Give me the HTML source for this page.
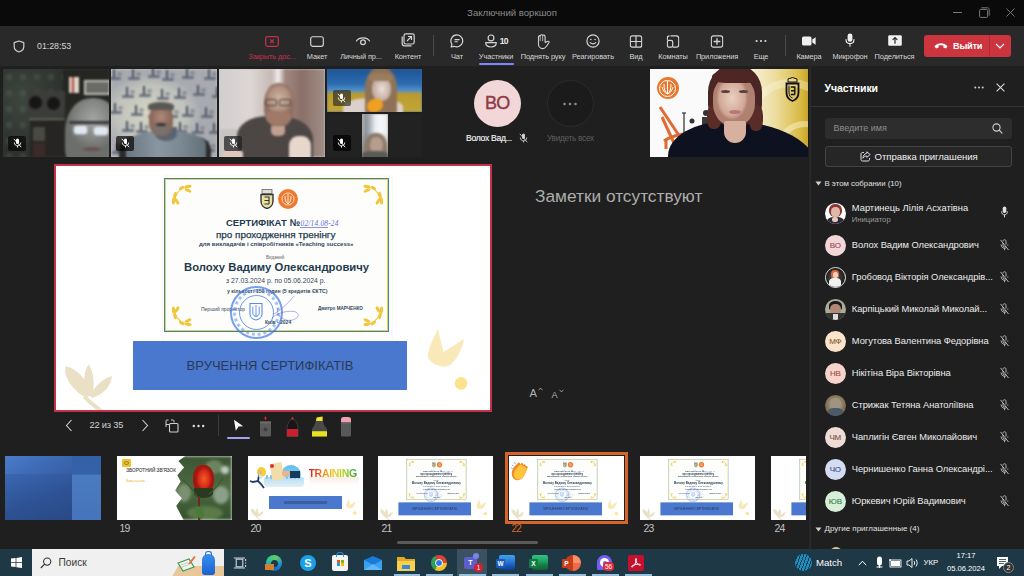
<!DOCTYPE html>
<html><head><meta charset="utf-8">
<style>
*{margin:0;padding:0;box-sizing:border-box}
svg{display:block}
html,body{width:1024px;height:576px;overflow:hidden;background:#1f1f1f;font-family:"Liberation Sans",sans-serif;color:#fff}
.a{position:absolute}
#title{left:0;top:0;width:1024px;height:26px;background:#0a0a0a}
#toolbar{left:0;top:26px;width:1024px;height:40px;background:#292929}
.tb{position:absolute;top:0;height:40px;text-align:center}
.tb svg{position:absolute;left:50%;top:8px;transform:translateX(-50%)}
.tb span{position:absolute;left:0;right:0;top:25.8px;font-size:7.4px;color:#d6d6d6;white-space:nowrap;text-align:center;letter-spacing:-0.1px}
#main{left:0;top:66px;width:1024px;height:482px;background:#1f1f1f}
#panel{left:811px;top:66px;width:213px;height:482.75px;background:#1f1f1f;box-shadow:-1px 0 0 #2a2a2a,-2px 0 0 #262626}
#taskbar{left:0;top:548.75px;width:1024px;height:27.25px;background:#1f3845}
</style></head>
<body>
<div id="title" class="a">
  <div class="a" style="left:0;width:1024px;top:7px;text-align:center;font-size:9.6px;color:#8c8c8c;padding-left:-2px">Заключний воркшоп</div>
  <div class="a" style="left:953px;top:12px;width:8.5px;height:1px;background:#7a7a7a"></div>
  <svg class="a" style="left:979px;top:7px" width="11" height="11" viewBox="0 0 11 11"><rect x="0.6" y="2.4" width="8" height="8" rx="1" fill="none" stroke="#7a7a7a" stroke-width="1"/><path d="M2.4 0.8 H8.6 C9.6 0.8 10.2 1.4 10.2 2.4 V8.6" fill="none" stroke="#7a7a7a" stroke-width="1"/></svg>
  <svg class="a" style="left:1006px;top:8px" width="9" height="9" viewBox="0 0 9 9"><path d="M0.5 0.5 L8.5 8.5 M8.5 0.5 L0.5 8.5" stroke="#7a7a7a" stroke-width="1"/></svg>
</div>
<div id="toolbar" class="a">
  <svg class="a" style="left:13px;top:14px" width="12" height="13" viewBox="0 0 12 13"><path d="M6 1 L10.8 2.6 V6.5 C10.8 9.3 8.6 11.2 6 12 C3.4 11.2 1.2 9.3 1.2 6.5 V2.6 Z" fill="none" stroke="#cfcfcf" stroke-width="1.2" stroke-linejoin="round"/></svg>
  <div class="a" style="left:37px;top:15px;font-size:8.8px;color:#d6d6d6;letter-spacing:0">01:28:53</div>

  <div class="tb" style="left:247px;width:50px">
    <svg width="14" height="11" viewBox="0 0 14 11" style="top:9.5px"><rect x="0.7" y="0.7" width="12.6" height="9.6" rx="1.8" fill="none" stroke="#c4314b" stroke-width="1.2"/><path d="M5.2 3.4 L8.8 7 M8.8 3.4 L5.2 7" stroke="#c4314b" stroke-width="1.2"/></svg>
    <span style="color:#c4314b">Закрыть дос...</span>
  </div>
  <div class="tb" style="left:297px;width:40px">
    <svg width="14" height="11" viewBox="0 0 14 11" style="top:9.5px"><rect x="0.7" y="0.7" width="12.6" height="9.6" rx="2" fill="none" stroke="#d6d6d6" stroke-width="1.15"/></svg>
    <span>Макет</span>
  </div>
  <div class="tb" style="left:338px;width:46px">
    <svg width="15" height="10" viewBox="0 0 15 10" style="top:10px;margin-left:1.5px"><path d="M1 5 C3.5 0.8 11.5 0.8 14 5" fill="none" stroke="#d6d6d6" stroke-width="1.2" stroke-linecap="round"/><circle cx="7.5" cy="6.2" r="2.4" fill="none" stroke="#d6d6d6" stroke-width="1.2"/></svg>
    <span>Личный пр...</span>
  </div>
  <div class="tb" style="left:390px;width:36px">
    <svg width="14" height="14" viewBox="0 0 14 14" style="top:7px"><rect x="3" y="0.8" width="10.2" height="10.2" rx="1.8" fill="none" stroke="#d6d6d6" stroke-width="1.2"/><path d="M1.2 3.5 V10.5 C1.2 12 2 12.8 3.5 12.8 H10.5" fill="none" stroke="#d6d6d6" stroke-width="1.2"/><path d="M6 8 L10.3 3.7 M7 3.5 H10.5 V7" fill="none" stroke="#d6d6d6" stroke-width="1.2"/></svg>
    <span>Контент</span>
  </div>
  <div class="a" style="left:433px;top:9px;width:1px;height:21px;background:#4a4a4a"></div>
  <div class="tb" style="left:442px;width:30px">
    <svg width="14" height="14" viewBox="0 0 14 14" style="top:8px"><path d="M7 0.9 A6 6 0 1 1 4.1 12.3 L1.2 13 L1.9 10.2 A6 6 0 0 1 7 0.9 Z" fill="none" stroke="#d6d6d6" stroke-width="1.2" stroke-linejoin="round"/><path d="M4.5 5.6 H9.5 M4.5 7.8 H7.8" stroke="#d6d6d6" stroke-width="1.1"/></svg>
    <span>Чат</span>
  </div>
  <div class="tb" style="left:476px;width:40px">
    <svg width="13" height="14" viewBox="0 0 13 14" style="top:7.8px;left:14.5px"><circle cx="6.5" cy="3.9" r="2.9" fill="none" stroke="#d6d6d6" stroke-width="1.15"/><path d="M1.2 8.6 H11.8 C11.8 11.2 9.6 13 6.5 13 C3.4 13 1.2 11.2 1.2 8.6 Z" fill="none" stroke="#d6d6d6" stroke-width="1.2" stroke-linejoin="round"/></svg>
    <div class="a" style="left:23.7px;top:9.6px;font-size:8.6px;font-weight:bold;color:#e8e8e8;letter-spacing:-0.6px">10</div>
    <span>Участники</span>
  </div>
  <div class="a" style="left:479px;top:37px;width:35px;height:2px;background:#7f85f5;border-radius:1px"></div>
  <div class="tb" style="left:518px;width:50px">
    <svg width="13" height="16" viewBox="0 0 13 16" style="top:7.5px;margin-left:0.5px"><path d="M7.6 8.4 V3 C7.6 1.2 6.3 0.7 5.3 1.4 C4.7 0.4 3.1 0.4 2.6 1.7 C1.5 1.5 0.9 2.4 0.9 3.5 V9.8 C0.9 12.6 2.8 14.6 5.1 14.6 C6.9 14.6 8 13.6 9 12.2 L11.5 8.5 C11.9 7.8 11.3 7.1 10.5 7.3 Z" fill="none" stroke="#d6d6d6" stroke-width="1.1" stroke-linejoin="round"/><path d="M2.7 2 V7.2 M5.2 1.6 V7.2" stroke="#d6d6d6" stroke-width="0.8"/></svg>
    <span>Поднять руку</span>
  </div>
  <div class="tb" style="left:570px;width:46px">
    <svg width="14" height="14" viewBox="0 0 14 14" style="top:7.6px"><circle cx="7" cy="7" r="6.1" fill="none" stroke="#d6d6d6" stroke-width="1.2"/><circle cx="4.9" cy="5.5" r="0.8" fill="#d6d6d6"/><circle cx="9.1" cy="5.5" r="0.8" fill="#d6d6d6"/><path d="M4.2 8.5 C5.5 10.3 8.5 10.3 9.8 8.5" fill="none" stroke="#d6d6d6" stroke-width="1.1" stroke-linecap="round"/></svg>
    <span>Реагировать</span>
  </div>
  <div class="tb" style="left:622px;width:28px">
    <svg width="13" height="13" viewBox="0 0 13 13" style="top:8.6px"><rect x="0.8" y="0.8" width="11.4" height="11.4" rx="2" fill="none" stroke="#d6d6d6" stroke-width="1.2"/><path d="M6.5 1 V12 M1 6.5 H12" stroke="#d6d6d6" stroke-width="1.2"/></svg>
    <span>Вид</span>
  </div>
  <div class="tb" style="left:655px;width:36px">
    <svg width="13" height="13" viewBox="0 0 13 13" style="top:8.6px"><path d="M4 0.8 H10 C11.3 0.8 12.2 1.7 12.2 3 V10 C12.2 11.3 11.3 12.2 10 12.2 H6.2" fill="none" stroke="#d6d6d6" stroke-width="1.2"/><rect x="0.8" y="5.4" width="5.4" height="6.8" rx="1.6" fill="none" stroke="#d6d6d6" stroke-width="1.2"/><path d="M0.8 5 V3 C0.8 1.7 1.7 0.8 3 0.8" fill="none" stroke="#d6d6d6" stroke-width="1.2"/></svg>
    <span>Комнаты</span>
  </div>
  <div class="tb" style="left:694px;width:46px">
    <svg width="13" height="13" viewBox="0 0 13 13" style="top:8.6px"><rect x="0.8" y="0.8" width="11.4" height="11.4" rx="2.2" fill="none" stroke="#d6d6d6" stroke-width="1.2"/><path d="M6.5 3.2 V9.8 M3.2 6.5 H9.8" stroke="#d6d6d6" stroke-width="1.3"/></svg>
    <span>Приложения</span>
  </div>
  <div class="tb" style="left:748px;width:26px">
    <svg width="12" height="4" viewBox="0 0 12 4" style="top:13px"><circle cx="1.6" cy="2" r="1.1" fill="#d6d6d6"/><circle cx="6" cy="2" r="1.1" fill="#d6d6d6"/><circle cx="10.4" cy="2" r="1.1" fill="#d6d6d6"/></svg>
    <span>Еще</span>
  </div>
  <div class="a" style="left:785px;top:9px;width:1px;height:21px;background:#4a4a4a"></div>
  <div class="tb" style="left:794px;width:30px">
    <svg width="14" height="10" viewBox="0 0 14 10" style="top:10px"><rect x="0" y="0.5" width="9.5" height="9" rx="1.6" fill="#f0f0f0"/><path d="M10.3 3.4 L13.6 1.2 V8.8 L10.3 6.6 Z" fill="#f0f0f0"/></svg>
    <span>Камера</span>
  </div>
  <div class="tb" style="left:830px;width:40px">
    <svg width="10" height="14" viewBox="0 0 10 14" style="top:7px"><rect x="2.6" y="0.4" width="4.8" height="8.4" rx="2.4" fill="#f0f0f0"/><path d="M1 6.5 C1 9 2.8 10.6 5 10.6 C7.2 10.6 9 9 9 6.5 M5 10.6 V13.2" fill="none" stroke="#f0f0f0" stroke-width="1.1" stroke-linecap="round"/></svg>
    <span>Микрофон</span>
  </div>
  <div class="tb" style="left:873px;width:43px">
    <svg width="14" height="11" viewBox="0 0 14 11" style="top:9px"><rect x="0.2" y="0.2" width="13.6" height="10.6" rx="1.3" fill="#f0f0f0"/><path d="M7 8.8 V2.6 M4.6 4.9 L7 2.5 L9.4 4.9" fill="none" stroke="#292929" stroke-width="1.2"/></svg>
    <span>Поделиться</span>
  </div>
  <div class="a" style="left:924px;top:9px;width:87px;height:22px;background:#cc353e;border-radius:3px">
    <svg class="a" style="left:10px;top:7px" width="14" height="7" viewBox="0 0 14 7"><path d="M0.5 4.2 C4 0.3 10 0.3 13.5 4.2 L12 6.5 L9.4 5.4 V3.6 C7.8 3 6.2 3 4.6 3.6 V5.4 L2 6.5 Z" fill="#fff"/></svg>
    <div class="a" style="left:29px;top:5.5px;font-size:9.2px;font-weight:bold;color:#fff;letter-spacing:-0.25px">Выйти</div>
    <div class="a" style="left:65px;top:0;width:1px;height:22px;background:#b02a33"></div>
    <svg class="a" style="left:71px;top:8px" width="10" height="6" viewBox="0 0 10 6"><path d="M1 1 L5 5 L9 1" fill="none" stroke="#fff" stroke-width="1.1"/></svg>
  </div>
</div>
<div id="main" class="a">
  <!-- tile 1 -->
  <div class="a" style="left:3px;top:3px;width:106px;height:88px;overflow:hidden;background:#30362f">
   <div class="a" style="left:0;top:0;width:106px;height:88px;filter:blur(0.8px)">
    <div class="a" style="left:0;top:0;width:62px;height:88px;background:radial-gradient(ellipse 50px 60px at 20px 30px,#3e4640,#2c322d 85%)"></div>
    <div class="a" style="left:0;top:0;width:62px;height:88px;opacity:.35;background:radial-gradient(circle at 6px 8px,#5a625a 0 3px,transparent 4px) 0 0/14px 16px"></div>
    <div class="a" style="left:60px;top:0;width:46px;height:88px;background:#252522"></div>
    <div class="a" style="left:24px;top:22px;width:38px;height:26px;background:#3c3d3a"></div>
    <div class="a" style="left:26px;top:27px;width:13px;height:13px;border-radius:50%;background:#161616;box-shadow:0 0 0 1px #3a3a38"></div>
    <div class="a" style="left:44px;top:28px;width:13px;height:13px;border-radius:50%;background:#161616;box-shadow:0 0 0 1px #3a3a38"></div>
    <div class="a" style="left:26px;top:49px;width:36px;height:2px;background:#5e5c52"></div>
    <div class="a" style="left:27px;top:52px;width:34px;height:36px;background:#262523"></div>
    <div class="a" style="left:30px;top:58px;width:12px;height:14px;background:#4a4a44"></div>
    <div class="a" style="left:30px;top:74px;width:12px;height:14px;background:#3a2a28"></div>
    <div class="a" style="left:66px;top:8px;width:10px;height:16px;background:linear-gradient(90deg,#d8d0c0 0 30%,#b04040 30% 45%,#e0d8c8 45%)"></div>
    <div class="a" style="left:81px;top:11px;width:27px;height:15px;background:#6a6a66;border:2px solid #c0c0b8"></div>
    <div class="a" style="left:62px;top:29px;width:56px;height:72px;border-radius:46% 46% 30% 30%;background:radial-gradient(ellipse 26px 30px at 28px 22px,#a4a6a4,#858785 60%,#6c6e6c)"></div>
    <div class="a" style="left:66px;top:52px;width:44px;height:3px;background:#3a3a3a;border-radius:2px"></div>
    <div class="a" style="left:71px;top:57px;width:13px;height:8px;border-radius:3px;background:#dfe8f0;box-shadow:0 0 2px #eef"></div>
    <div class="a" style="left:91px;top:58px;width:14px;height:8px;border-radius:3px;background:#dfe8f0;box-shadow:0 0 2px #eef"></div>
    <div class="a" style="left:80px;top:78px;width:18px;height:4px;border-radius:50%;background:#6a5050"></div>
   </div>
   <div class="a" style="left:5px;top:66.5px;width:18px;height:15.5px;border-radius:2px;background:rgba(8,8,8,.75)"><div class="a" style="left:4.5px;top:2.8px"><svg width="9" height="10" viewBox="0 0 9 10"><rect x="3" y="0.5" width="3" height="5.5" rx="1.5" fill="#fff"/><path d="M1.3 4.5 C1.3 6.6 2.7 7.8 4.5 7.8 C6.3 7.8 7.7 6.6 7.7 4.5 M4.5 7.8 V9.5" fill="none" stroke="#fff" stroke-width="0.9"/><path d="M0.8 0.8 L8.2 9.2" stroke="#fff" stroke-width="0.9"/></svg></div></div>
  </div>
  <!-- tile 2 -->
  <div class="a" style="left:111px;top:3px;width:106px;height:88px;overflow:hidden;background:#c8c9c0">
   <div class="a" style="left:0;top:0;width:106px;height:88px;filter:blur(0.9px)">
    <div class="a" style="left:0;top:0;width:106px;height:88px;background:radial-gradient(ellipse 50px 40px at 40px 45px,#d6d6c4,#c0c2bc 70%,#a8aab0)"></div>
    <div class="a" style="left:2.4px;top:0.2px;width:2px;height:9px;background:#4a5262"></div><div class="a" style="left:-1.6px;top:8.2px;width:12px;height:3px;border-radius:1px;background:#5a6272;opacity:.8"></div><div class="a" style="left:6.4px;top:3.2px;width:5px;height:4px;border-radius:50%;background:#6a7282;opacity:.6"></div><div class="a" style="left:21.2px;top:0.4px;width:2px;height:9px;background:#4a5262"></div><div class="a" style="left:17.2px;top:8.4px;width:12px;height:3px;border-radius:1px;background:#5a6272;opacity:.8"></div><div class="a" style="left:25.2px;top:3.4px;width:5px;height:4px;border-radius:50%;background:#6a7282;opacity:.6"></div><div class="a" style="left:40.8px;top:-1.7px;width:2px;height:9px;background:#4a5262"></div><div class="a" style="left:36.8px;top:6.3px;width:12px;height:3px;border-radius:1px;background:#5a6272;opacity:.8"></div><div class="a" style="left:44.8px;top:1.3px;width:5px;height:4px;border-radius:50%;background:#6a7282;opacity:.6"></div><div class="a" style="left:55.1px;top:1.3px;width:2px;height:9px;background:#4a5262"></div><div class="a" style="left:51.1px;top:9.3px;width:12px;height:3px;border-radius:1px;background:#5a6272;opacity:.8"></div><div class="a" style="left:59.1px;top:4.3px;width:5px;height:4px;border-radius:50%;background:#6a7282;opacity:.6"></div><div class="a" style="left:74.6px;top:-1.1px;width:2px;height:9px;background:#4a5262"></div><div class="a" style="left:70.6px;top:6.9px;width:12px;height:3px;border-radius:1px;background:#5a6272;opacity:.8"></div><div class="a" style="left:78.6px;top:1.9px;width:5px;height:4px;border-radius:50%;background:#6a7282;opacity:.6"></div><div class="a" style="left:97.0px;top:-0.1px;width:2px;height:9px;background:#4a5262"></div><div class="a" style="left:93.0px;top:7.9px;width:12px;height:3px;border-radius:1px;background:#5a6272;opacity:.8"></div><div class="a" style="left:101.0px;top:2.9px;width:5px;height:4px;border-radius:50%;background:#6a7282;opacity:.6"></div><div class="a" style="left:15.0px;top:17.9px;width:2px;height:9px;background:#4a5262"></div><div class="a" style="left:11.0px;top:25.9px;width:12px;height:3px;border-radius:1px;background:#5a6272;opacity:.8"></div><div class="a" style="left:19.0px;top:20.9px;width:5px;height:4px;border-radius:50%;background:#6a7282;opacity:.6"></div><div class="a" style="left:31.8px;top:16.6px;width:2px;height:9px;background:#4a5262"></div><div class="a" style="left:27.8px;top:24.6px;width:12px;height:3px;border-radius:1px;background:#5a6272;opacity:.8"></div><div class="a" style="left:35.8px;top:19.6px;width:5px;height:4px;border-radius:50%;background:#6a7282;opacity:.6"></div><div class="a" style="left:49.8px;top:19.5px;width:2px;height:9px;background:#4a5262"></div><div class="a" style="left:45.8px;top:27.5px;width:12px;height:3px;border-radius:1px;background:#5a6272;opacity:.8"></div><div class="a" style="left:53.8px;top:22.5px;width:5px;height:4px;border-radius:50%;background:#6a7282;opacity:.6"></div><div class="a" style="left:67.1px;top:19.0px;width:2px;height:9px;background:#4a5262"></div><div class="a" style="left:63.1px;top:27.0px;width:12px;height:3px;border-radius:1px;background:#5a6272;opacity:.8"></div><div class="a" style="left:71.1px;top:22.0px;width:5px;height:4px;border-radius:50%;background:#6a7282;opacity:.6"></div><div class="a" style="left:86.0px;top:16.3px;width:2px;height:9px;background:#4a5262"></div><div class="a" style="left:82.0px;top:24.3px;width:12px;height:3px;border-radius:1px;background:#5a6272;opacity:.8"></div><div class="a" style="left:90.0px;top:19.3px;width:5px;height:4px;border-radius:50%;background:#6a7282;opacity:.6"></div><div class="a" style="left:104.5px;top:18.4px;width:2px;height:9px;background:#4a5262"></div><div class="a" style="left:100.5px;top:26.4px;width:12px;height:3px;border-radius:1px;background:#5a6272;opacity:.8"></div><div class="a" style="left:108.5px;top:21.4px;width:5px;height:4px;border-radius:50%;background:#6a7282;opacity:.6"></div><div class="a" style="left:2.8px;top:34.1px;width:2px;height:9px;background:#4a5262"></div><div class="a" style="left:-1.2px;top:42.1px;width:12px;height:3px;border-radius:1px;background:#5a6272;opacity:.8"></div><div class="a" style="left:6.8px;top:37.1px;width:5px;height:4px;border-radius:50%;background:#6a7282;opacity:.6"></div><div class="a" style="left:24.2px;top:35.9px;width:2px;height:9px;background:#4a5262"></div><div class="a" style="left:20.2px;top:43.9px;width:12px;height:3px;border-radius:1px;background:#5a6272;opacity:.8"></div><div class="a" style="left:28.2px;top:38.9px;width:5px;height:4px;border-radius:50%;background:#6a7282;opacity:.6"></div><div class="a" style="left:41.3px;top:37.5px;width:2px;height:9px;background:#4a5262"></div><div class="a" style="left:37.3px;top:45.5px;width:12px;height:3px;border-radius:1px;background:#5a6272;opacity:.8"></div><div class="a" style="left:45.3px;top:40.5px;width:5px;height:4px;border-radius:50%;background:#6a7282;opacity:.6"></div><div class="a" style="left:59.3px;top:37.7px;width:2px;height:9px;background:#4a5262"></div><div class="a" style="left:55.3px;top:45.7px;width:12px;height:3px;border-radius:1px;background:#5a6272;opacity:.8"></div><div class="a" style="left:63.3px;top:40.7px;width:5px;height:4px;border-radius:50%;background:#6a7282;opacity:.6"></div><div class="a" style="left:75.4px;top:37.2px;width:2px;height:9px;background:#4a5262"></div><div class="a" style="left:71.4px;top:45.2px;width:12px;height:3px;border-radius:1px;background:#5a6272;opacity:.8"></div><div class="a" style="left:79.4px;top:40.2px;width:5px;height:4px;border-radius:50%;background:#6a7282;opacity:.6"></div><div class="a" style="left:93.7px;top:37.7px;width:2px;height:9px;background:#4a5262"></div><div class="a" style="left:89.7px;top:45.7px;width:12px;height:3px;border-radius:1px;background:#5a6272;opacity:.8"></div><div class="a" style="left:97.7px;top:40.7px;width:5px;height:4px;border-radius:50%;background:#6a7282;opacity:.6"></div><div class="a" style="left:15.3px;top:52.4px;width:2px;height:9px;background:#4a5262"></div><div class="a" style="left:11.3px;top:60.4px;width:12px;height:3px;border-radius:1px;background:#5a6272;opacity:.8"></div><div class="a" style="left:19.3px;top:55.4px;width:5px;height:4px;border-radius:50%;background:#6a7282;opacity:.6"></div><div class="a" style="left:28.8px;top:52.9px;width:2px;height:9px;background:#4a5262"></div><div class="a" style="left:24.8px;top:60.9px;width:12px;height:3px;border-radius:1px;background:#5a6272;opacity:.8"></div><div class="a" style="left:32.8px;top:55.9px;width:5px;height:4px;border-radius:50%;background:#6a7282;opacity:.6"></div><div class="a" style="left:51.8px;top:53.7px;width:2px;height:9px;background:#4a5262"></div><div class="a" style="left:47.8px;top:61.7px;width:12px;height:3px;border-radius:1px;background:#5a6272;opacity:.8"></div><div class="a" style="left:55.8px;top:56.7px;width:5px;height:4px;border-radius:50%;background:#6a7282;opacity:.6"></div><div class="a" style="left:67.8px;top:53.2px;width:2px;height:9px;background:#4a5262"></div><div class="a" style="left:63.8px;top:61.2px;width:12px;height:3px;border-radius:1px;background:#5a6272;opacity:.8"></div><div class="a" style="left:71.8px;top:56.2px;width:5px;height:4px;border-radius:50%;background:#6a7282;opacity:.6"></div><div class="a" style="left:85.0px;top:53.5px;width:2px;height:9px;background:#4a5262"></div><div class="a" style="left:81.0px;top:61.5px;width:12px;height:3px;border-radius:1px;background:#5a6272;opacity:.8"></div><div class="a" style="left:89.0px;top:56.5px;width:5px;height:4px;border-radius:50%;background:#6a7282;opacity:.6"></div><div class="a" style="left:102.1px;top:54.3px;width:2px;height:9px;background:#4a5262"></div><div class="a" style="left:98.1px;top:62.3px;width:12px;height:3px;border-radius:1px;background:#5a6272;opacity:.8"></div><div class="a" style="left:106.1px;top:57.3px;width:5px;height:4px;border-radius:50%;background:#6a7282;opacity:.6"></div><div class="a" style="left:4.5px;top:73.6px;width:2px;height:9px;background:#4a5262"></div><div class="a" style="left:0.5px;top:81.6px;width:12px;height:3px;border-radius:1px;background:#5a6272;opacity:.8"></div><div class="a" style="left:8.5px;top:76.6px;width:5px;height:4px;border-radius:50%;background:#6a7282;opacity:.6"></div><div class="a" style="left:23.1px;top:73.7px;width:2px;height:9px;background:#4a5262"></div><div class="a" style="left:19.1px;top:81.7px;width:12px;height:3px;border-radius:1px;background:#5a6272;opacity:.8"></div><div class="a" style="left:27.1px;top:76.7px;width:5px;height:4px;border-radius:50%;background:#6a7282;opacity:.6"></div><div class="a" style="left:42.1px;top:74.0px;width:2px;height:9px;background:#4a5262"></div><div class="a" style="left:38.1px;top:82.0px;width:12px;height:3px;border-radius:1px;background:#5a6272;opacity:.8"></div><div class="a" style="left:46.1px;top:77.0px;width:5px;height:4px;border-radius:50%;background:#6a7282;opacity:.6"></div><div class="a" style="left:59.0px;top:70.7px;width:2px;height:9px;background:#4a5262"></div><div class="a" style="left:55.0px;top:78.7px;width:12px;height:3px;border-radius:1px;background:#5a6272;opacity:.8"></div><div class="a" style="left:63.0px;top:73.7px;width:5px;height:4px;border-radius:50%;background:#6a7282;opacity:.6"></div><div class="a" style="left:78.2px;top:73.9px;width:2px;height:9px;background:#4a5262"></div><div class="a" style="left:74.2px;top:81.9px;width:12px;height:3px;border-radius:1px;background:#5a6272;opacity:.8"></div><div class="a" style="left:82.2px;top:76.9px;width:5px;height:4px;border-radius:50%;background:#6a7282;opacity:.6"></div><div class="a" style="left:96.4px;top:72.3px;width:2px;height:9px;background:#4a5262"></div><div class="a" style="left:92.4px;top:80.3px;width:12px;height:3px;border-radius:1px;background:#5a6272;opacity:.8"></div><div class="a" style="left:100.4px;top:75.3px;width:5px;height:4px;border-radius:50%;background:#6a7282;opacity:.6"></div>
    <div class="a" style="left:8px;top:68px;width:92px;height:24px;background:#2a2a2a;border-radius:14px 14px 0 0"></div>
    <div class="a" style="left:15px;top:62px;width:80px;height:30px;border-radius:45% 45% 0 0;background:linear-gradient(90deg,#6a7884,#8a96a0 40%,#7a8892 70%,#647078)"></div>
    <div class="a" style="left:44px;top:58px;width:22px;height:14px;border-radius:0 0 50% 50%;background:#5a6470"></div>
    <div class="a" style="left:38px;top:35px;width:24px;height:32px;border-radius:45% 45% 42% 42%;background:radial-gradient(ellipse 10px 12px at 12px 13px,#b08a7a,#8a6858)"></div>
    <div class="a" style="left:37px;top:33px;width:26px;height:8px;border-radius:50% 50% 10% 10%;background:#5a5854"></div>
    <div class="a" style="left:42px;top:54px;width:16px;height:12px;border-radius:30% 30% 50% 50%;background:#7a706c"></div>
    <div class="a" style="left:45px;top:54px;width:10px;height:3px;border-radius:50%;background:#3a3030"></div>
   </div>
   <div class="a" style="left:5px;top:66.5px;width:18px;height:15.5px;border-radius:2px;background:rgba(8,8,8,.72)"><div class="a" style="left:4.5px;top:2.8px"><svg width="9" height="10" viewBox="0 0 9 10"><rect x="3" y="0.5" width="3" height="5.5" rx="1.5" fill="#fff"/><path d="M1.3 4.5 C1.3 6.6 2.7 7.8 4.5 7.8 C6.3 7.8 7.7 6.6 7.7 4.5 M4.5 7.8 V9.5" fill="none" stroke="#fff" stroke-width="0.9"/><path d="M0.8 0.8 L8.2 9.2" stroke="#fff" stroke-width="0.9"/></svg></div></div>
  </div>
  <!-- tile 3 -->
  <div class="a" style="left:219px;top:3px;width:106px;height:88px;overflow:hidden;background:#d0c8c6">
   <div class="a" style="left:0;top:0;width:106px;height:88px;filter:blur(1px)">
    <div class="a" style="left:0;top:0;width:106px;height:88px;background:linear-gradient(90deg,#d2cfcf 0,#dcd6d4 30%,#c8bcb8 48%,#a08880 62%,#8a7068 78%,#a08e88 100%)"></div>
    <div class="a" style="left:52px;top:0;width:14px;height:45px;background:linear-gradient(90deg,transparent,#f4eef0,transparent)"></div>
    <div class="a" style="left:0;top:60px;width:30px;height:28px;background:#c8c4c4"></div>
    <div class="a" style="left:18px;top:47px;width:76px;height:50px;border-radius:40% 45% 0 0;background:#4c4644"></div>
    <div class="a" style="left:70px;top:67px;width:22px;height:24px;border-radius:40% 40% 0 0;background:#e6d6cc"></div>
    <div class="a" style="left:4px;top:80px;width:20px;height:10px;border-radius:40% 40% 0 0;background:#dcc8bc"></div>
    <div class="a" style="left:45px;top:14px;width:30px;height:44px;border-radius:46% 46% 42% 42%;background:radial-gradient(ellipse 14px 16px at 15px 16px,#d0b4a4,#b09080 75%,#907060)"></div>
    <div class="a" style="left:47px;top:42px;width:24px;height:14px;border-radius:30% 30% 50% 50%;background:#a07a68"></div>
    <div class="a" style="left:46px;top:30px;width:12px;height:7px;border:1.2px solid #4a403c;border-radius:2px"></div><div class="a" style="left:60px;top:30px;width:12px;height:7px;border:1.2px solid #4a403c;border-radius:2px"></div>
    <div class="a" style="left:52px;top:57px;width:14px;height:10px;background:#c0a090;border-radius:0 0 40% 40%"></div>
   </div>
   <div class="a" style="left:5px;top:66.5px;width:18px;height:15.5px;border-radius:2px;background:rgba(30,30,30,.72)"><div class="a" style="left:4.5px;top:2.8px"><svg width="9" height="10" viewBox="0 0 9 10"><rect x="3" y="0.5" width="3" height="5.5" rx="1.5" fill="#fff"/><path d="M1.3 4.5 C1.3 6.6 2.7 7.8 4.5 7.8 C6.3 7.8 7.7 6.6 7.7 4.5 M4.5 7.8 V9.5" fill="none" stroke="#fff" stroke-width="0.9"/><path d="M0.8 0.8 L8.2 9.2" stroke="#fff" stroke-width="0.9"/></svg></div></div>
  </div>
  <!-- tile 4 -->
  <div class="a" style="left:327px;top:3px;width:95px;height:43px;overflow:hidden;background:#2c6cb4">
   <div class="a" style="left:0;top:0;width:95px;height:43px;filter:blur(0.9px)">
    <div class="a" style="left:0;top:0;width:95px;height:43px;background:linear-gradient(180deg,#1e5494 0,#2c6cb0 35%,#5a94c8 52%,#b89a30 56%,#c4a636 100%)"></div>
    <div class="a" style="left:16px;top:29px;width:60px;height:20px;border-radius:45% 45% 0 0;background:#dcd0cc"></div>
    <div class="a" style="left:38px;top:-2px;width:32px;height:48px;border-radius:45% 45% 10% 10%;background:#8e7258"></div>
    <div class="a" style="left:45px;top:8px;width:19px;height:24px;border-radius:45%;background:radial-gradient(ellipse 8px 11px at 10px 12px,#ece0dc,#c8b0a4)"></div>
    <div class="a" style="left:42px;top:4px;width:24px;height:8px;border-radius:50% 50% 20% 20%;background:#9a7c5e"></div>
    <div class="a" style="left:40px;top:30px;width:16px;height:13px;border-radius:50% 40% 50% 40%;background:#f0a020;transform:rotate(-10deg)"></div>
   </div>
   <div class="a" style="left:5.5px;top:21px;width:18.5px;height:16px;border-radius:2px;background:rgba(50,50,35,.7)"><div class="a" style="left:4.5px;top:3px"><svg width="9" height="10" viewBox="0 0 9 10"><rect x="3" y="0.5" width="3" height="5.5" rx="1.5" fill="#fff"/><path d="M1.3 4.5 C1.3 6.6 2.7 7.8 4.5 7.8 C6.3 7.8 7.7 6.6 7.7 4.5 M4.5 7.8 V9.5" fill="none" stroke="#fff" stroke-width="0.9"/><path d="M0.8 0.8 L8.2 9.2" stroke="#fff" stroke-width="0.9"/></svg></div></div>
  </div>
  <div class="a" style="left:327px;top:48px;width:95px;height:43px;overflow:hidden;background:#222">
    <div class="a" style="left:35px;top:0;width:26px;height:43px;overflow:hidden;background:#a09890">
     <div class="a" style="left:0;top:0;width:26px;height:43px;filter:blur(0.9px)">
      <div class="a" style="left:0;top:0;width:26px;height:43px;background:linear-gradient(90deg,#c8c0b8 0,#8a9098 12%,#a8b0b8 30%,#e8ecf0 50%,#f6f8fa 70%,#e8ece8 100%)"></div>
      <div class="a" style="left:0;top:18px;width:26px;height:27px;background:linear-gradient(180deg,rgba(90,80,70,0),rgba(90,80,70,.6))"></div>
      <div class="a" style="left:3px;top:19px;width:22px;height:28px;border-radius:45% 45% 20% 20%;background:#8a7a68"></div>
      <div class="a" style="left:8px;top:23px;width:13px;height:16px;border-radius:45%;background:#b89c8c"></div>
      <div class="a" style="left:0;top:37px;width:26px;height:8px;background:#5a5a58;border-radius:40% 40% 0 0"></div>
     </div>
    </div>
    <div class="a" style="left:5.5px;top:21px;width:18.5px;height:16px;border-radius:2px;background:rgba(5,5,5,.8)"><div class="a" style="left:4.5px;top:3px"><svg width="9" height="10" viewBox="0 0 9 10"><rect x="3" y="0.5" width="3" height="5.5" rx="1.5" fill="#fff"/><path d="M1.3 4.5 C1.3 6.6 2.7 7.8 4.5 7.8 C6.3 7.8 7.7 6.6 7.7 4.5 M4.5 7.8 V9.5" fill="none" stroke="#fff" stroke-width="0.9"/><path d="M0.8 0.8 L8.2 9.2" stroke="#fff" stroke-width="0.9"/></svg></div></div>
  </div>
  <!-- avatar BO -->
  <div class="a" style="left:474px;top:14px;width:47px;height:47px;border-radius:50%;background:#f2d6d8;color:#8e3a44;font-size:18px;text-align:center;line-height:47px;-webkit-text-stroke:0.4px #8e3a44;letter-spacing:-0.3px">ВО</div>
  <div class="a" style="left:466px;top:66.5px;font-size:8.6px;color:#f4f4f4;white-space:nowrap;letter-spacing:-0.3px;-webkit-text-stroke:0.15px #f4f4f4">Волох Вад...</div>
  <div class="a" style="left:519px;top:67px"><svg width="9" height="10" viewBox="0 0 9 10"><rect x="3" y="0.5" width="3" height="5.5" rx="1.5" fill="#cfcfcf"/><path d="M1.3 4.5 C1.3 6.6 2.7 7.8 4.5 7.8 C6.3 7.8 7.7 6.6 7.7 4.5 M4.5 7.8 V9.5" fill="none" stroke="#cfcfcf" stroke-width="0.9"/><path d="M0.8 0.8 L8.2 9.2" stroke="#cfcfcf" stroke-width="0.9"/></svg></div>
  <div class="a" style="left:547px;top:14px;width:47px;height:47px;border-radius:50%;background:#1b1b1b;border:1px solid #2c2c2c"></div>
  <svg class="a" style="left:562px;top:36px" width="16" height="4" viewBox="0 0 16 4"><circle cx="2.5" cy="2" r="1.3" fill="#8a8a8a"/><circle cx="8" cy="2" r="1.3" fill="#8a8a8a"/><circle cx="13.5" cy="2" r="1.3" fill="#8a8a8a"/></svg>
  <div class="a" style="left:540px;top:66.5px;width:61px;text-align:center;font-size:8.3px;color:#5e5e5e;white-space:nowrap;letter-spacing:-0.3px">Увидеть всех</div>
  <!-- presenter -->
  <div class="a" style="left:650px;top:3px;width:158px;height:88px;overflow:hidden;background:#fafafa">
   <div class="a" style="left:0;top:0;width:158px;height:88px;filter:blur(0.7px)">
    <div class="a" style="left:0;top:0;width:158px;height:88px;background:linear-gradient(90deg,#fafafa 0,#fafafa 60%,#f6eed0 66%,#ecdc9c 80%,#d8b840 96%,#c8a428 100%)"></div>
    <div class="a" style="left:95px;top:10px;width:90px;height:90px;border-radius:50%;border:8px solid rgba(255,250,230,.35)"></div>
    <div class="a" style="left:125px;top:52px;width:60px;height:60px;border-radius:50%;border:6px solid rgba(255,248,220,.45)"></div>
    <div class="a" style="left:6.5px;top:8px;width:22px;height:22px;border-radius:50%;background:#e9782c"></div>
    <div class="a" style="left:9px;top:10.5px;width:17px;height:17px;border-radius:50%;border:1px solid #fff"></div>
    <svg class="a" style="left:10px;top:11px" width="15" height="16" viewBox="0 0 15 16"><path d="M7.5 1 V14 M4 4 C4 9 5 12 7.5 14 M11 4 C11 9 10 12 7.5 14 M2 7 C3 11 5 13 7.5 14 M13 7 C12 11 10 13 7.5 14" fill="none" stroke="#fff" stroke-width="1"/></svg>
    <svg class="a" style="left:8px;top:36px" width="52" height="48" viewBox="0 0 52 48"><path d="M2 2 L22 32 M4 12 L16 38" stroke="#e06a30" stroke-width="3" fill="none"/><path d="M6 36 C14 30 22 30 30 28" stroke="#e06a30" stroke-width="3" fill="none"/><path d="M8 34 V44" stroke="#e06a30" stroke-width="3"/><path d="M26 8 V28 M24 8 H28" stroke="#555" stroke-width="1.5"/><circle cx="34" cy="16" r="2.5" fill="#333"/><path d="M22 44 C22 30 28 26 40 24 L46 20 C48 18 50 20 50 22 V44 Z" fill="#3a3a3a"/><circle cx="30" cy="40" r="6" fill="#2a2a2a"/><circle cx="48" cy="8" r="3" fill="#333"/><path d="M44 12 H52 V24 H44 Z" fill="#3a3a3a"/></svg>
    <svg class="a" style="left:135px;top:8px" width="15" height="25" viewBox="0 0 15 25"><path d="M3 5 V2 L7.5 0.5 L12 2 V5 Z" fill="none" stroke="#111" stroke-width="1"/><path d="M1.5 6.5 H13.5 V15.5 C13.5 20 10.5 23 7.5 24 C4.5 23 1.5 20 1.5 15.5 Z" fill="none" stroke="#111" stroke-width="1.8"/><path d="M4 8.5 V15.5 C4 18.5 5.6 20.5 7.5 21" fill="none" stroke="#111" stroke-width="1"/><path d="M5.8 10 H9.8 V17.5 M6 13.8 H9.8 M5.8 17.5 H9.8" fill="none" stroke="#111" stroke-width="1.4"/></svg>
    <div class="a" style="left:18px;top:52px;width:150px;height:70px;border-radius:40% 60% 0 0 / 50% 70% 0 0;background:#0e1220"></div>
    <div class="a" style="left:58px;top:-4px;width:54px;height:60px;border-radius:45% 45% 35% 35%;background:#4a2624"></div>
    <div class="a" style="left:57px;top:36px;width:14px;height:24px;border-radius:40%;background:#5a2c28"></div>
    <div class="a" style="left:99px;top:36px;width:14px;height:26px;border-radius:40%;background:#5a2c28"></div>
    <div class="a" style="left:63px;top:7px;width:42px;height:50px;border-radius:42% 42% 45% 45%;background:radial-gradient(ellipse 16px 22px at 19px 22px,#ecd0c0,#d0a898 80%,#b08070)"></div>
    <div class="a" style="left:62px;top:1px;width:44px;height:13px;border-radius:50% 50% 20% 30%;background:#4e2624"></div>
    <div class="a" style="left:71px;top:21px;width:9px;height:3px;border-radius:50%;background:#5a4040"></div>
    <div class="a" style="left:89px;top:21px;width:9px;height:3px;border-radius:50%;background:#5a4040"></div>
    <div class="a" style="left:79px;top:41px;width:12px;height:4px;border-radius:50%;background:#b87878"></div>
    <div class="a" style="left:74px;top:52px;width:22px;height:22px;background:#d8b0a0;border-radius:10% 10% 50% 50%"></div>
       </div>
  </div>
</div>
<div id="slide" class="a" style="left:54px;top:164px;width:438px;height:248px;border:2px solid #c4314b;background:#fff;overflow:hidden">
  <div class="a" style="left:0;top:0;width:434px;height:244px;">
    <!-- leaves -->
    <svg class="a" style="left:0;top:0" width="434" height="244" viewBox="0 0 434 244"><g fill="#e9e0c6"><path d="M31 232 C18 226 7 212 9.5 200 C22 203 32 215 35 228 Z"/><path d="M32 229 C27 219 27 206 32.5 198.5 C38 206 39 220 36 231 Z"/><path d="M34 229 C40 219 48 212 56 210 C55 220 47 229 36 232 Z"/><path d="M29 229 C36 235 41 239 47 244 H41 C35 240 31 236 27 232 Z"/></g><path d="M382 163 C376 175 371 185 372 192 C377 199 386 202 392 200 C400 196 406 184 408 173 L387.5 186 Z" fill="#f9e8b8"/><circle cx="405" cy="217.4" r="6.3" fill="#fde28e"/></svg>
    
    
    <!-- certificate paper -->
    <div class="a" style="left:107px;top:10px;width:229px;height:166px;background:#fdfdfc;box-shadow:0 0 1px #ddd"></div>
    <div class="a" style="left:108px;top:12px;width:225px;height:154px;border:1.2px solid #3d7fc0;"></div>
    <div class="a" style="left:109.2px;top:13.2px;width:222.6px;height:151.6px;border:1.1px solid #e6da3a;"></div>
    <!-- corner laurels -->
    <svg class="a" style="left:114px;top:17px" width="23" height="24" viewBox="0 0 23 24"><g fill="#f1c63a"><path d="M4 20 C5 12 9 6 16 4" stroke="#f1c63a" stroke-width="1.1" fill="none"/><ellipse cx="18" cy="3.6" rx="3.6" ry="1.6" transform="rotate(-10 18 3.6)"/><ellipse cx="18" cy="7.4" rx="3.6" ry="1.6" transform="rotate(25 18 7.4)"/><ellipse cx="11.5" cy="5" rx="3" ry="1.5" transform="rotate(-35 11.5 5)"/><ellipse cx="5" cy="12" rx="1.5" ry="3.4" transform="rotate(15 5 12)"/><ellipse cx="3.5" cy="18" rx="1.6" ry="3.6" transform="rotate(5 3.5 18)"/><ellipse cx="7" cy="18.5" rx="1.6" ry="3.6" transform="rotate(-30 7 18.5)"/></g></svg>
    <svg class="a" style="left:306px;top:17px" width="23" height="24" viewBox="0 0 23 24"><g fill="#f1c63a" transform="translate(23 0) scale(-1 1)"><path d="M4 20 C5 12 9 6 16 4" stroke="#f1c63a" stroke-width="1.1" fill="none"/><ellipse cx="18" cy="3.6" rx="3.6" ry="1.6" transform="rotate(-10 18 3.6)"/><ellipse cx="18" cy="7.4" rx="3.6" ry="1.6" transform="rotate(25 18 7.4)"/><ellipse cx="11.5" cy="5" rx="3" ry="1.5" transform="rotate(-35 11.5 5)"/><ellipse cx="5" cy="12" rx="1.5" ry="3.4" transform="rotate(15 5 12)"/><ellipse cx="3.5" cy="18" rx="1.6" ry="3.6" transform="rotate(5 3.5 18)"/><ellipse cx="7" cy="18.5" rx="1.6" ry="3.6" transform="rotate(-30 7 18.5)"/></g></svg>
    <svg class="a" style="left:114px;top:138px" width="23" height="24" viewBox="0 0 23 24"><g fill="#f1c63a" transform="translate(0 24) scale(1 -1)"><path d="M4 20 C5 12 9 6 16 4" stroke="#f1c63a" stroke-width="1.1" fill="none"/><ellipse cx="18" cy="3.6" rx="3.6" ry="1.6" transform="rotate(-10 18 3.6)"/><ellipse cx="18" cy="7.4" rx="3.6" ry="1.6" transform="rotate(25 18 7.4)"/><ellipse cx="11.5" cy="5" rx="3" ry="1.5" transform="rotate(-35 11.5 5)"/><ellipse cx="5" cy="12" rx="1.5" ry="3.4" transform="rotate(15 5 12)"/><ellipse cx="3.5" cy="18" rx="1.6" ry="3.6" transform="rotate(5 3.5 18)"/><ellipse cx="7" cy="18.5" rx="1.6" ry="3.6" transform="rotate(-30 7 18.5)"/></g></svg>
    <svg class="a" style="left:306px;top:138px" width="23" height="24" viewBox="0 0 23 24"><g fill="#f1c63a" transform="translate(23 24) scale(-1 -1)"><path d="M4 20 C5 12 9 6 16 4" stroke="#f1c63a" stroke-width="1.1" fill="none"/><ellipse cx="18" cy="3.6" rx="3.6" ry="1.6" transform="rotate(-10 18 3.6)"/><ellipse cx="18" cy="7.4" rx="3.6" ry="1.6" transform="rotate(25 18 7.4)"/><ellipse cx="11.5" cy="5" rx="3" ry="1.5" transform="rotate(-35 11.5 5)"/><ellipse cx="5" cy="12" rx="1.5" ry="3.4" transform="rotate(15 5 12)"/><ellipse cx="3.5" cy="18" rx="1.6" ry="3.6" transform="rotate(5 3.5 18)"/><ellipse cx="7" cy="18.5" rx="1.6" ry="3.6" transform="rotate(-30 7 18.5)"/></g></svg>
    <!-- logos -->
    <svg class="a" style="left:204px;top:23px" width="14" height="20" viewBox="0 0 14 20"><rect x="2" y="0.5" width="10" height="4" fill="#ddd" stroke="#666" stroke-width="0.8"/><path d="M1 5.5 H13 V12 C13 16 10 18.8 7 19.5 C4 18.8 1 16 1 12 Z" fill="#e8e0a0" stroke="#333" stroke-width="1.4"/><path d="M4.5 8 H9 V15 M4.5 11.5 H9 M4.5 15 H9" fill="none" stroke="#333" stroke-width="1.1"/></svg>
    <div class="a" style="left:222px;top:23px;width:20px;height:20px;border-radius:50%;background:#ee7a30"></div><svg class="a" style="left:225px;top:26px" width="14" height="14" viewBox="0 0 14 14"><circle cx="7" cy="7" r="6" fill="none" stroke="#fff" stroke-width="0.7"/><path d="M7 2 V12 M4 4 C4 8 5 11 7 12 M10 4 C10 8 9 11 7 12" fill="none" stroke="#fff" stroke-width="0.8"/></svg>
    <!-- texts -->
    <div class="a" style="left:170px;top:51px;font-size:9.5px;font-weight:bold;color:#1e3a4e;white-space:nowrap">СЕРТИФІКАТ №</div>
    <div class="a" style="left:244.5px;top:53px;font-size:7.4px;font-style:italic;color:#6a70d8;white-space:nowrap;font-family:'Liberation Serif',serif;letter-spacing:0.2px">02/14.08-24</div><div class="a" style="left:244px;top:61px;width:28px;height:0.6px;background:#8a90e0"></div>
    <div class="a" style="left:160px;top:63px;font-size:9.9px;color:#1e3a4e;white-space:nowrap;-webkit-text-stroke:0.25px #1e3a4e">про проходження тренінгу</div>
    <div class="a" style="left:143px;top:75px;font-size:6px;font-weight:bold;color:#34485a;white-space:nowrap">для викладачів і співробітників «Teaching success»</div>
    <div class="a" style="left:210px;top:89px;font-size:4.5px;color:#666;white-space:nowrap">Виданий</div>
    <div class="a" style="left:128px;top:95px;font-size:11.3px;font-weight:bold;color:#1e3a4e;white-space:nowrap">Волоху Вадиму Олександровичу</div>
    <div class="a" style="left:170px;top:111px;font-size:6.8px;color:#34485a;white-space:nowrap">з 27.03.2024 р. по 05.06.2024 р.</div>
    <div class="a" style="left:171px;top:121.5px;font-size:5.2px;font-weight:bold;color:#34485a;white-space:nowrap">у кількості 150 годин (5 кредитів ЄКТС)</div>
    <div class="a" style="left:145px;top:140px;font-size:5px;color:#34485a;white-space:nowrap">Перший проректор</div>
    <div class="a" style="left:262px;top:140px;font-size:4.6px;font-weight:bold;color:#34485a;white-space:nowrap">Дмитро МАРЧЕНКО</div>
    <div class="a" style="left:209px;top:153px;font-size:5px;font-weight:bold;color:#34485a;white-space:nowrap">Київ - 2024</div>
    <!-- stamp -->
    <div class="a" style="left:173.5px;top:119.5px;width:53px;height:53px;border-radius:50%;border:2px solid rgba(60,120,230,.7);"></div><div class="a" style="left:176.5px;top:122.5px;width:47px;height:47px;border-radius:50%;border:3px dotted rgba(60,120,230,.45);"></div>
    <div class="a" style="left:182.5px;top:128.5px;width:35px;height:35px;border-radius:50%;border:1.3px solid rgba(60,120,230,.75);"></div>
    <svg class="a" style="left:193px;top:136px" width="14" height="19" viewBox="0 0 14 19"><path d="M1 1.5 V12 C1 15 3.5 17.5 7 18 C10.5 17.5 13 15 13 12 V1.5 Z" fill="none" stroke="rgba(60,120,230,.85)" stroke-width="1.1"/><path d="M7 3 V15 M3.8 4.5 V11 C3.8 13 5.2 14.2 7 14.2 C8.8 14.2 10.2 13 10.2 11 V4.5" fill="none" stroke="rgba(60,120,230,.85)" stroke-width="0.9"/></svg>
    <svg class="a" style="left:212px;top:128px" width="34" height="30" viewBox="0 0 34 30"><path d="M6 20 C12 16 20 10 26 2 M4 24 C10 18 22 16 28 18 C34 22 26 28 18 26 C12 24 8 20 10 14" fill="none" stroke="rgba(110,100,210,.65)" stroke-width="0.8"/></svg>
    <!-- banner -->
    <div class="a" style="left:77px;top:175px;width:274px;height:49px;background:#4a78cf"></div>
    <div class="a" style="left:77px;top:175px;width:274px;height:49px;line-height:49px;text-align:center;font-size:13px;color:#2b3a55;white-space:nowrap">ВРУЧЕННЯ СЕРТИФІКАТІВ</div>
  </div>
</div>
<div id="notes" class="a" style="left:535px;top:186px;font-size:17.3px;color:#adadad;white-space:nowrap">Заметки отсутствуют</div>
<div class="a" style="left:529.5px;top:386.5px;font-size:11.2px;color:#b0b0b0">A</div>
<svg class="a" style="left:538px;top:387px" width="5" height="4" viewBox="0 0 5 4"><path d="M0.6 3.2 L2.5 1 L4.4 3.2" fill="none" stroke="#b0b0b0" stroke-width="0.8"/></svg>
<div class="a" style="left:551.5px;top:389.5px;font-size:9.2px;color:#b0b0b0">A</div>
<svg class="a" style="left:558.5px;top:388.5px" width="5" height="4" viewBox="0 0 5 4"><path d="M0.6 0.8 L2.5 3 L4.4 0.8" fill="none" stroke="#b0b0b0" stroke-width="0.8"/></svg>

<!-- slide controls -->
<svg class="a" style="left:65px;top:419px" width="8" height="13" viewBox="0 0 8 13"><path d="M6.5 1 L1.5 6.5 L6.5 12" fill="none" stroke="#cfcfcf" stroke-width="1.1"/></svg>
<div class="a" style="left:89.5px;top:420px;font-size:9.3px;color:#d0d0d0;white-space:nowrap;letter-spacing:-0.2px">22 из 35</div>
<svg class="a" style="left:141px;top:419px" width="8" height="13" viewBox="0 0 8 13"><path d="M1.5 1 L6.5 6.5 L1.5 12" fill="none" stroke="#cfcfcf" stroke-width="1.1"/></svg>
<svg class="a" style="left:165px;top:419px" width="14" height="14" viewBox="0 0 14 14"><path d="M1 8 V2 C1 1.4 1.4 1 2 1 H3.5 M6 1 H8 C8.6 1 9 1.4 9 2 V3.5 M1 5.5 H4" fill="none" stroke="#cfcfcf" stroke-width="1"/><rect x="4.5" y="4.5" width="8.5" height="8.5" rx="1" fill="none" stroke="#cfcfcf" stroke-width="1.1"/></svg>
<svg class="a" style="left:192px;top:424px" width="13" height="4" viewBox="0 0 13 4"><circle cx="1.8" cy="2" r="1.2" fill="#e0e0e0"/><circle cx="6.5" cy="2" r="1.2" fill="#e0e0e0"/><circle cx="11.2" cy="2" r="1.2" fill="#e0e0e0"/></svg>
<div class="a" style="left:218px;top:415px;width:1px;height:21px;background:#3c3c3c"></div>
<svg class="a" style="left:233px;top:419px" width="11" height="13" viewBox="0 0 11 13"><path d="M1 0.8 L10.2 7.2 L5.6 7.6 L2.8 11.8 Z" fill="#fafafa"/></svg>
<div class="a" style="left:227px;top:437px;width:23px;height:1.8px;background:#9ea2f0;border-radius:1px"></div>
<svg class="a" style="left:259px;top:416px" width="13" height="21" viewBox="0 0 13 21"><path d="M6.5 0.5 V4" stroke="#e02030" stroke-width="1"/><circle cx="6.5" cy="2.2" r="1.1" fill="#e02030"/><rect x="1" y="5.5" width="11" height="15" rx="1" fill="#5a5a5a"/><rect x="1" y="5.5" width="11" height="2" fill="#6a6a6a"/><circle cx="6.5" cy="13.5" r="2" fill="#3e3e3e"/></svg>
<svg class="a" style="left:286px;top:416px" width="13" height="21" viewBox="0 0 13 21"><path d="M6.5 0.6 L8.2 3.6 H4.8 Z" fill="#e51c2a"/><path d="M4.8 3.6 H8.2 C10.5 6 12 9 12 12.5 V20.5 H1 V12.5 C1 9 2.5 6 4.8 3.6 Z" fill="#161616" stroke="#4a4a4a" stroke-width="0.7"/><rect x="1" y="13" width="11" height="7.5" fill="#c8202c"/></svg>
<svg class="a" style="left:311px;top:416px" width="17" height="21" viewBox="0 0 17 21"><path d="M5 5 L5.6 1.6 L11.6 0.5 V5 Z" fill="#f2e62a"/><path d="M4.6 5 H12 L13 9 L16 13 V20.5 H1 V13 L3.6 9 Z" fill="#4a4a4a"/><rect x="1" y="15.2" width="15" height="5.3" fill="#e8e020"/></svg>
<svg class="a" style="left:340px;top:416px" width="12" height="21" viewBox="0 0 12 21"><path d="M1 6 V3.5 C1 2 2 1 3.5 1 H8.5 C10 1 11 2 11 3.5 V6 Z" fill="#f2a0b0"/><rect x="1" y="6" width="10" height="14.5" rx="0.8" fill="#585858"/><rect x="1" y="6" width="10" height="1.5" fill="#6a6a6a"/></svg>
<!-- thumbnails -->
<div class="a" style="left:5px;top:456px;width:801px;height:80px;overflow:hidden">
  <div class="a" style="left:-19px;top:0;width:115px;height:64px;overflow:hidden;background:linear-gradient(160deg,#4a7cc8 0,#3a66b0 25%,#2e5294 60%,#26467e 100%)">
    <div class="a" style="left:0;top:0;width:115px;height:18px;background:linear-gradient(90deg,rgba(90,140,220,.35),rgba(40,80,150,.1))"></div>
    <div class="a" style="left:86px;top:0;width:29px;height:64px;background:linear-gradient(180deg,#3460a8 0,#3462a8 28%,#4a7ac0 30%,#4674bc 100%)"></div>
  </div>
  <div class="a" style="left:112px;top:0;width:115px;height:64px;background:#fff;overflow:hidden">
    <div class="a" style="left:4.5px;top:3px;width:9px;height:8px;background:#f0c030;border-radius:1px"></div>
    <div class="a" style="left:6.5px;top:5px;width:5px;height:4px;border:0.8px solid #a08030;border-radius:50%"></div>
    <div class="a" style="left:9.2px;top:12.2px;font-size:4.7px;color:#444;white-space:nowrap;-webkit-text-stroke:0.1px #444">ЗВОРОТНИЙ ЗВ'ЯЗОК</div>
    <div class="a" style="left:9.2px;top:23px;font-size:3px;color:#f0b030;white-space:nowrap">Ваму гасалғи ...</div>
    <div class="a" style="left:58px;top:0;width:57px;height:64px;overflow:hidden;clip-path:polygon(18% 0,100% 0,100% 100%,15% 100%,2% 78%,12% 66%,0 54%,10% 40%,4% 30%,16% 18%,6% 8%)">
      <div class="a" style="left:0;top:0;width:57px;height:64px;filter:blur(1.4px);background:linear-gradient(180deg,#3a5432,#4e6a42 50%,#34502c)">
        <div class="a" style="left:30px;top:4px;width:18px;height:14px;border-radius:50%;background:#6a8460"></div>
        <div class="a" style="left:2px;top:28px;width:14px;height:18px;border-radius:50%;background:#7a9070"></div>
        <div class="a" style="left:38px;top:30px;width:16px;height:18px;border-radius:50%;background:#8aa088"></div>
        <div class="a" style="left:46px;top:10px;width:8px;height:8px;border-radius:50%;background:#c0ccc0"></div>
        <div class="a" style="left:12px;top:50px;width:36px;height:14px;border-radius:50%;background:#5a7a48"></div>
      </div>
    </div>
    <div class="a" style="left:75.5px;top:9px;width:21.5px;height:30px;border-radius:40% 45% 50% 50%;background:radial-gradient(ellipse 8px 12px at 11px 14px,#f06020,#d82818 70%,#a01810)"></div>
    <div class="a" style="left:77px;top:32px;width:19px;height:10px;border-radius:0 0 50% 50%;background:#2a3a20"></div>
    <div class="a" style="left:81px;top:40px;width:2px;height:24px;background:#6a2a20"></div>
    <svg class="a" style="left:62px;top:20px" width="50" height="44" viewBox="0 0 50 44"><path d="M4 4 C10 8 14 14 18 20 M44 2 C40 8 36 14 30 18" stroke="#3a5a2a" stroke-width="1.2" fill="none"/><path d="M22 44 C16 38 14 34 20 30 C26 34 26 40 22 44 Z" fill="#4a7a3a"/></svg>
  </div>
  <div class="a" style="left:243px;top:0;width:115px;height:64px;background:#fff;overflow:hidden">
    <div class="a" style="left:33px;top:9px;width:20px;height:18px;border-radius:50% 50% 0 0;background:linear-gradient(180deg,#60bce8,#a8dcf4)"></div>
    <div class="a" style="left:16px;top:21px;width:40px;height:10px;background:linear-gradient(180deg,#b8dcf0,#e0f0f8);border-radius:2px 2px 4px 4px"></div>
    <div class="a" style="left:18px;top:19px;width:36px;height:4px;background:repeating-linear-gradient(90deg,#88c4e4 0 2px,transparent 2px 4px)"></div>
    <div class="a" style="left:9px;top:11px;width:9px;height:10px;border-radius:50%;background:#f6d030"></div>
    <div class="a" style="left:23px;top:7px;width:12px;height:17px;background:#f2dca8;transform:rotate(-10deg)"></div>
    <div class="a" style="left:22px;top:8px;width:4px;height:4px;border-radius:50%;background:#e03030"></div>
    <div class="a" style="left:34px;top:15px;width:8px;height:5px;border-radius:2px;background:#f0b090"></div>
    <div class="a" style="left:42px;top:15px;width:10px;height:7px;background:#163a5c"></div>
    <svg class="a" style="left:1px;top:13px" width="18" height="20" viewBox="0 0 18 20"><circle cx="11" cy="3" r="2" fill="#e8b090"/><path d="M10 6 L9 12 L4 13 L1 12 M9 12 L12 15 L15 19" fill="none" stroke="#1a3a6a" stroke-width="1.8"/><path d="M10 6 L13 9" stroke="#cfe4f4" stroke-width="2.5"/></svg>
    <div class="a" style="left:60.5px;top:11px;font-size:10.5px;font-weight:bold;white-space:nowrap;letter-spacing:-0.3px;background:linear-gradient(90deg,#d81c1c 0,#e8501c 18%,#f0a020 35%,#e8d020 55%,#a0d020 75%,#20a030 100%);-webkit-background-clip:text;color:transparent">TRAINING</div>
    <div class="a" style="left:61px;top:21px;width:50px;height:8px;background:linear-gradient(180deg,rgba(240,200,180,.35),rgba(255,255,255,0))"></div>
    <div class="a" style="left:21px;top:40px;width:73px;height:13px;background:#4a78cf"></div>
    <div class="a" style="left:36px;top:45px;width:43px;height:2.5px;background:#2b3a55;opacity:.4"></div>
    <svg class="a" style="left:0;top:0" width="115" height="64" viewBox="0 0 434 244"><g fill="#e9e0c6"><path d="M31 232 C18 226 7 212 9.5 200 C22 203 32 215 35 228 Z"/><path d="M32 229 C27 219 27 206 32.5 198.5 C38 206 39 220 36 231 Z"/><path d="M34 229 C40 219 48 212 56 210 C55 220 47 229 36 232 Z"/><path d="M29 229 C36 235 41 239 47 244 H41 C35 240 31 236 27 232 Z"/></g><path d="M382 163 C376 175 371 185 372 192 C377 199 386 202 392 200 C400 196 406 184 408 173 L387.5 186 Z" fill="#f9e8b8"/><circle cx="405" cy="217.4" r="6.3" fill="#fde28e"/></svg>
  </div>
  <div class="a" style="left:373px;top:0;width:115px;height:64px;background:#fff;overflow:hidden"><div class="a" style="left:0;top:0;width:434px;height:244px;transform:scale(0.265);transform-origin:0 0"><div class="a" style="left:0;top:0;width:434px;height:244px;">
    <!-- leaves -->
    <svg class="a" style="left:0;top:0" width="434" height="244" viewBox="0 0 434 244"><g fill="#e9e0c6"><path d="M31 232 C18 226 7 212 9.5 200 C22 203 32 215 35 228 Z"/><path d="M32 229 C27 219 27 206 32.5 198.5 C38 206 39 220 36 231 Z"/><path d="M34 229 C40 219 48 212 56 210 C55 220 47 229 36 232 Z"/><path d="M29 229 C36 235 41 239 47 244 H41 C35 240 31 236 27 232 Z"/></g><path d="M382 163 C376 175 371 185 372 192 C377 199 386 202 392 200 C400 196 406 184 408 173 L387.5 186 Z" fill="#f9e8b8"/><circle cx="405" cy="217.4" r="6.3" fill="#fde28e"/></svg>
    
    
    <!-- certificate paper -->
    <div class="a" style="left:107px;top:10px;width:229px;height:166px;background:#fdfdfc;box-shadow:0 0 1px #ddd"></div>
    <div class="a" style="left:108px;top:12px;width:225px;height:154px;border:1.2px solid #3d7fc0;"></div>
    <div class="a" style="left:109.2px;top:13.2px;width:222.6px;height:151.6px;border:1.1px solid #e6da3a;"></div>
    <!-- corner laurels -->
    <svg class="a" style="left:114px;top:17px" width="23" height="24" viewBox="0 0 23 24"><g fill="#f1c63a"><path d="M4 20 C5 12 9 6 16 4" stroke="#f1c63a" stroke-width="1.1" fill="none"/><ellipse cx="18" cy="3.6" rx="3.6" ry="1.6" transform="rotate(-10 18 3.6)"/><ellipse cx="18" cy="7.4" rx="3.6" ry="1.6" transform="rotate(25 18 7.4)"/><ellipse cx="11.5" cy="5" rx="3" ry="1.5" transform="rotate(-35 11.5 5)"/><ellipse cx="5" cy="12" rx="1.5" ry="3.4" transform="rotate(15 5 12)"/><ellipse cx="3.5" cy="18" rx="1.6" ry="3.6" transform="rotate(5 3.5 18)"/><ellipse cx="7" cy="18.5" rx="1.6" ry="3.6" transform="rotate(-30 7 18.5)"/></g></svg>
    <svg class="a" style="left:306px;top:17px" width="23" height="24" viewBox="0 0 23 24"><g fill="#f1c63a" transform="translate(23 0) scale(-1 1)"><path d="M4 20 C5 12 9 6 16 4" stroke="#f1c63a" stroke-width="1.1" fill="none"/><ellipse cx="18" cy="3.6" rx="3.6" ry="1.6" transform="rotate(-10 18 3.6)"/><ellipse cx="18" cy="7.4" rx="3.6" ry="1.6" transform="rotate(25 18 7.4)"/><ellipse cx="11.5" cy="5" rx="3" ry="1.5" transform="rotate(-35 11.5 5)"/><ellipse cx="5" cy="12" rx="1.5" ry="3.4" transform="rotate(15 5 12)"/><ellipse cx="3.5" cy="18" rx="1.6" ry="3.6" transform="rotate(5 3.5 18)"/><ellipse cx="7" cy="18.5" rx="1.6" ry="3.6" transform="rotate(-30 7 18.5)"/></g></svg>
    <svg class="a" style="left:114px;top:138px" width="23" height="24" viewBox="0 0 23 24"><g fill="#f1c63a" transform="translate(0 24) scale(1 -1)"><path d="M4 20 C5 12 9 6 16 4" stroke="#f1c63a" stroke-width="1.1" fill="none"/><ellipse cx="18" cy="3.6" rx="3.6" ry="1.6" transform="rotate(-10 18 3.6)"/><ellipse cx="18" cy="7.4" rx="3.6" ry="1.6" transform="rotate(25 18 7.4)"/><ellipse cx="11.5" cy="5" rx="3" ry="1.5" transform="rotate(-35 11.5 5)"/><ellipse cx="5" cy="12" rx="1.5" ry="3.4" transform="rotate(15 5 12)"/><ellipse cx="3.5" cy="18" rx="1.6" ry="3.6" transform="rotate(5 3.5 18)"/><ellipse cx="7" cy="18.5" rx="1.6" ry="3.6" transform="rotate(-30 7 18.5)"/></g></svg>
    <svg class="a" style="left:306px;top:138px" width="23" height="24" viewBox="0 0 23 24"><g fill="#f1c63a" transform="translate(23 24) scale(-1 -1)"><path d="M4 20 C5 12 9 6 16 4" stroke="#f1c63a" stroke-width="1.1" fill="none"/><ellipse cx="18" cy="3.6" rx="3.6" ry="1.6" transform="rotate(-10 18 3.6)"/><ellipse cx="18" cy="7.4" rx="3.6" ry="1.6" transform="rotate(25 18 7.4)"/><ellipse cx="11.5" cy="5" rx="3" ry="1.5" transform="rotate(-35 11.5 5)"/><ellipse cx="5" cy="12" rx="1.5" ry="3.4" transform="rotate(15 5 12)"/><ellipse cx="3.5" cy="18" rx="1.6" ry="3.6" transform="rotate(5 3.5 18)"/><ellipse cx="7" cy="18.5" rx="1.6" ry="3.6" transform="rotate(-30 7 18.5)"/></g></svg>
    <!-- logos -->
    <svg class="a" style="left:204px;top:23px" width="14" height="20" viewBox="0 0 14 20"><rect x="2" y="0.5" width="10" height="4" fill="#ddd" stroke="#666" stroke-width="0.8"/><path d="M1 5.5 H13 V12 C13 16 10 18.8 7 19.5 C4 18.8 1 16 1 12 Z" fill="#e8e0a0" stroke="#333" stroke-width="1.4"/><path d="M4.5 8 H9 V15 M4.5 11.5 H9 M4.5 15 H9" fill="none" stroke="#333" stroke-width="1.1"/></svg>
    <div class="a" style="left:222px;top:23px;width:20px;height:20px;border-radius:50%;background:#ee7a30"></div><svg class="a" style="left:225px;top:26px" width="14" height="14" viewBox="0 0 14 14"><circle cx="7" cy="7" r="6" fill="none" stroke="#fff" stroke-width="0.7"/><path d="M7 2 V12 M4 4 C4 8 5 11 7 12 M10 4 C10 8 9 11 7 12" fill="none" stroke="#fff" stroke-width="0.8"/></svg>
    <!-- texts -->
    <div class="a" style="left:170px;top:51px;font-size:9.5px;font-weight:bold;color:#1e3a4e;white-space:nowrap">СЕРТИФІКАТ №</div>
    <div class="a" style="left:244.5px;top:53px;font-size:7.4px;font-style:italic;color:#6a70d8;white-space:nowrap;font-family:'Liberation Serif',serif;letter-spacing:0.2px">02/14.08-24</div><div class="a" style="left:244px;top:61px;width:28px;height:0.6px;background:#8a90e0"></div>
    <div class="a" style="left:160px;top:63px;font-size:9.9px;color:#1e3a4e;white-space:nowrap;-webkit-text-stroke:0.25px #1e3a4e">про проходження тренінгу</div>
    <div class="a" style="left:143px;top:75px;font-size:6px;font-weight:bold;color:#34485a;white-space:nowrap">для викладачів і співробітників «Teaching success»</div>
    <div class="a" style="left:210px;top:89px;font-size:4.5px;color:#666;white-space:nowrap">Виданий</div>
    <div class="a" style="left:128px;top:95px;font-size:11.3px;font-weight:bold;color:#1e3a4e;white-space:nowrap">Волоху Вадиму Олександровичу</div>
    <div class="a" style="left:170px;top:111px;font-size:6.8px;color:#34485a;white-space:nowrap">з 27.03.2024 р. по 05.06.2024 р.</div>
    <div class="a" style="left:171px;top:121.5px;font-size:5.2px;font-weight:bold;color:#34485a;white-space:nowrap">у кількості 150 годин (5 кредитів ЄКТС)</div>
    <div class="a" style="left:145px;top:140px;font-size:5px;color:#34485a;white-space:nowrap">Перший проректор</div>
    <div class="a" style="left:262px;top:140px;font-size:4.6px;font-weight:bold;color:#34485a;white-space:nowrap">Дмитро МАРЧЕНКО</div>
    <div class="a" style="left:209px;top:153px;font-size:5px;font-weight:bold;color:#34485a;white-space:nowrap">Київ - 2024</div>
    <!-- stamp -->
    <div class="a" style="left:173.5px;top:119.5px;width:53px;height:53px;border-radius:50%;border:2px solid rgba(60,120,230,.7);"></div><div class="a" style="left:176.5px;top:122.5px;width:47px;height:47px;border-radius:50%;border:3px dotted rgba(60,120,230,.45);"></div>
    <div class="a" style="left:182.5px;top:128.5px;width:35px;height:35px;border-radius:50%;border:1.3px solid rgba(60,120,230,.75);"></div>
    <svg class="a" style="left:193px;top:136px" width="14" height="19" viewBox="0 0 14 19"><path d="M1 1.5 V12 C1 15 3.5 17.5 7 18 C10.5 17.5 13 15 13 12 V1.5 Z" fill="none" stroke="rgba(60,120,230,.85)" stroke-width="1.1"/><path d="M7 3 V15 M3.8 4.5 V11 C3.8 13 5.2 14.2 7 14.2 C8.8 14.2 10.2 13 10.2 11 V4.5" fill="none" stroke="rgba(60,120,230,.85)" stroke-width="0.9"/></svg>
    <svg class="a" style="left:212px;top:128px" width="34" height="30" viewBox="0 0 34 30"><path d="M6 20 C12 16 20 10 26 2 M4 24 C10 18 22 16 28 18 C34 22 26 28 18 26 C12 24 8 20 10 14" fill="none" stroke="rgba(110,100,210,.65)" stroke-width="0.8"/></svg>
    <!-- banner -->
    <div class="a" style="left:77px;top:175px;width:274px;height:49px;background:#4a78cf"></div>
    <div class="a" style="left:77px;top:175px;width:274px;height:49px;line-height:49px;text-align:center;font-size:13px;color:#2b3a55;white-space:nowrap">ВРУЧЕННЯ СЕРТИФІКАТІВ</div>
  </div></div></div>
  <div class="a" style="left:504px;top:0;width:115px;height:64px;background:#fff;overflow:hidden"><div class="a" style="left:0;top:0;width:434px;height:244px;transform:scale(0.265);transform-origin:0 0"><div class="a" style="left:0;top:0;width:434px;height:244px;">
    <!-- leaves -->
    <svg class="a" style="left:0;top:0" width="434" height="244" viewBox="0 0 434 244"><g fill="#e9e0c6"><path d="M31 232 C18 226 7 212 9.5 200 C22 203 32 215 35 228 Z"/><path d="M32 229 C27 219 27 206 32.5 198.5 C38 206 39 220 36 231 Z"/><path d="M34 229 C40 219 48 212 56 210 C55 220 47 229 36 232 Z"/><path d="M29 229 C36 235 41 239 47 244 H41 C35 240 31 236 27 232 Z"/></g><path d="M382 163 C376 175 371 185 372 192 C377 199 386 202 392 200 C400 196 406 184 408 173 L387.5 186 Z" fill="#f9e8b8"/><circle cx="405" cy="217.4" r="6.3" fill="#fde28e"/></svg>
    
    
    <!-- certificate paper -->
    <div class="a" style="left:107px;top:10px;width:229px;height:166px;background:#fdfdfc;box-shadow:0 0 1px #ddd"></div>
    <div class="a" style="left:108px;top:12px;width:225px;height:154px;border:1.2px solid #3d7fc0;"></div>
    <div class="a" style="left:109.2px;top:13.2px;width:222.6px;height:151.6px;border:1.1px solid #e6da3a;"></div>
    <!-- corner laurels -->
    <svg class="a" style="left:114px;top:17px" width="23" height="24" viewBox="0 0 23 24"><g fill="#f1c63a"><path d="M4 20 C5 12 9 6 16 4" stroke="#f1c63a" stroke-width="1.1" fill="none"/><ellipse cx="18" cy="3.6" rx="3.6" ry="1.6" transform="rotate(-10 18 3.6)"/><ellipse cx="18" cy="7.4" rx="3.6" ry="1.6" transform="rotate(25 18 7.4)"/><ellipse cx="11.5" cy="5" rx="3" ry="1.5" transform="rotate(-35 11.5 5)"/><ellipse cx="5" cy="12" rx="1.5" ry="3.4" transform="rotate(15 5 12)"/><ellipse cx="3.5" cy="18" rx="1.6" ry="3.6" transform="rotate(5 3.5 18)"/><ellipse cx="7" cy="18.5" rx="1.6" ry="3.6" transform="rotate(-30 7 18.5)"/></g></svg>
    <svg class="a" style="left:306px;top:17px" width="23" height="24" viewBox="0 0 23 24"><g fill="#f1c63a" transform="translate(23 0) scale(-1 1)"><path d="M4 20 C5 12 9 6 16 4" stroke="#f1c63a" stroke-width="1.1" fill="none"/><ellipse cx="18" cy="3.6" rx="3.6" ry="1.6" transform="rotate(-10 18 3.6)"/><ellipse cx="18" cy="7.4" rx="3.6" ry="1.6" transform="rotate(25 18 7.4)"/><ellipse cx="11.5" cy="5" rx="3" ry="1.5" transform="rotate(-35 11.5 5)"/><ellipse cx="5" cy="12" rx="1.5" ry="3.4" transform="rotate(15 5 12)"/><ellipse cx="3.5" cy="18" rx="1.6" ry="3.6" transform="rotate(5 3.5 18)"/><ellipse cx="7" cy="18.5" rx="1.6" ry="3.6" transform="rotate(-30 7 18.5)"/></g></svg>
    <svg class="a" style="left:114px;top:138px" width="23" height="24" viewBox="0 0 23 24"><g fill="#f1c63a" transform="translate(0 24) scale(1 -1)"><path d="M4 20 C5 12 9 6 16 4" stroke="#f1c63a" stroke-width="1.1" fill="none"/><ellipse cx="18" cy="3.6" rx="3.6" ry="1.6" transform="rotate(-10 18 3.6)"/><ellipse cx="18" cy="7.4" rx="3.6" ry="1.6" transform="rotate(25 18 7.4)"/><ellipse cx="11.5" cy="5" rx="3" ry="1.5" transform="rotate(-35 11.5 5)"/><ellipse cx="5" cy="12" rx="1.5" ry="3.4" transform="rotate(15 5 12)"/><ellipse cx="3.5" cy="18" rx="1.6" ry="3.6" transform="rotate(5 3.5 18)"/><ellipse cx="7" cy="18.5" rx="1.6" ry="3.6" transform="rotate(-30 7 18.5)"/></g></svg>
    <svg class="a" style="left:306px;top:138px" width="23" height="24" viewBox="0 0 23 24"><g fill="#f1c63a" transform="translate(23 24) scale(-1 -1)"><path d="M4 20 C5 12 9 6 16 4" stroke="#f1c63a" stroke-width="1.1" fill="none"/><ellipse cx="18" cy="3.6" rx="3.6" ry="1.6" transform="rotate(-10 18 3.6)"/><ellipse cx="18" cy="7.4" rx="3.6" ry="1.6" transform="rotate(25 18 7.4)"/><ellipse cx="11.5" cy="5" rx="3" ry="1.5" transform="rotate(-35 11.5 5)"/><ellipse cx="5" cy="12" rx="1.5" ry="3.4" transform="rotate(15 5 12)"/><ellipse cx="3.5" cy="18" rx="1.6" ry="3.6" transform="rotate(5 3.5 18)"/><ellipse cx="7" cy="18.5" rx="1.6" ry="3.6" transform="rotate(-30 7 18.5)"/></g></svg>
    <!-- logos -->
    <svg class="a" style="left:204px;top:23px" width="14" height="20" viewBox="0 0 14 20"><rect x="2" y="0.5" width="10" height="4" fill="#ddd" stroke="#666" stroke-width="0.8"/><path d="M1 5.5 H13 V12 C13 16 10 18.8 7 19.5 C4 18.8 1 16 1 12 Z" fill="#e8e0a0" stroke="#333" stroke-width="1.4"/><path d="M4.5 8 H9 V15 M4.5 11.5 H9 M4.5 15 H9" fill="none" stroke="#333" stroke-width="1.1"/></svg>
    <div class="a" style="left:222px;top:23px;width:20px;height:20px;border-radius:50%;background:#ee7a30"></div><svg class="a" style="left:225px;top:26px" width="14" height="14" viewBox="0 0 14 14"><circle cx="7" cy="7" r="6" fill="none" stroke="#fff" stroke-width="0.7"/><path d="M7 2 V12 M4 4 C4 8 5 11 7 12 M10 4 C10 8 9 11 7 12" fill="none" stroke="#fff" stroke-width="0.8"/></svg>
    <!-- texts -->
    <div class="a" style="left:170px;top:51px;font-size:9.5px;font-weight:bold;color:#1e3a4e;white-space:nowrap">СЕРТИФІКАТ №</div>
    <div class="a" style="left:244.5px;top:53px;font-size:7.4px;font-style:italic;color:#6a70d8;white-space:nowrap;font-family:'Liberation Serif',serif;letter-spacing:0.2px">02/14.08-24</div><div class="a" style="left:244px;top:61px;width:28px;height:0.6px;background:#8a90e0"></div>
    <div class="a" style="left:160px;top:63px;font-size:9.9px;color:#1e3a4e;white-space:nowrap;-webkit-text-stroke:0.25px #1e3a4e">про проходження тренінгу</div>
    <div class="a" style="left:143px;top:75px;font-size:6px;font-weight:bold;color:#34485a;white-space:nowrap">для викладачів і співробітників «Teaching success»</div>
    <div class="a" style="left:210px;top:89px;font-size:4.5px;color:#666;white-space:nowrap">Виданий</div>
    <div class="a" style="left:128px;top:95px;font-size:11.3px;font-weight:bold;color:#1e3a4e;white-space:nowrap">Волоху Вадиму Олександровичу</div>
    <div class="a" style="left:170px;top:111px;font-size:6.8px;color:#34485a;white-space:nowrap">з 27.03.2024 р. по 05.06.2024 р.</div>
    <div class="a" style="left:171px;top:121.5px;font-size:5.2px;font-weight:bold;color:#34485a;white-space:nowrap">у кількості 150 годин (5 кредитів ЄКТС)</div>
    <div class="a" style="left:145px;top:140px;font-size:5px;color:#34485a;white-space:nowrap">Перший проректор</div>
    <div class="a" style="left:262px;top:140px;font-size:4.6px;font-weight:bold;color:#34485a;white-space:nowrap">Дмитро МАРЧЕНКО</div>
    <div class="a" style="left:209px;top:153px;font-size:5px;font-weight:bold;color:#34485a;white-space:nowrap">Київ - 2024</div>
    <!-- stamp -->
    <div class="a" style="left:173.5px;top:119.5px;width:53px;height:53px;border-radius:50%;border:2px solid rgba(60,120,230,.7);"></div><div class="a" style="left:176.5px;top:122.5px;width:47px;height:47px;border-radius:50%;border:3px dotted rgba(60,120,230,.45);"></div>
    <div class="a" style="left:182.5px;top:128.5px;width:35px;height:35px;border-radius:50%;border:1.3px solid rgba(60,120,230,.75);"></div>
    <svg class="a" style="left:193px;top:136px" width="14" height="19" viewBox="0 0 14 19"><path d="M1 1.5 V12 C1 15 3.5 17.5 7 18 C10.5 17.5 13 15 13 12 V1.5 Z" fill="none" stroke="rgba(60,120,230,.85)" stroke-width="1.1"/><path d="M7 3 V15 M3.8 4.5 V11 C3.8 13 5.2 14.2 7 14.2 C8.8 14.2 10.2 13 10.2 11 V4.5" fill="none" stroke="rgba(60,120,230,.85)" stroke-width="0.9"/></svg>
    <svg class="a" style="left:212px;top:128px" width="34" height="30" viewBox="0 0 34 30"><path d="M6 20 C12 16 20 10 26 2 M4 24 C10 18 22 16 28 18 C34 22 26 28 18 26 C12 24 8 20 10 14" fill="none" stroke="rgba(110,100,210,.65)" stroke-width="0.8"/></svg>
    <!-- banner -->
    <div class="a" style="left:77px;top:175px;width:274px;height:49px;background:#4a78cf"></div>
    <div class="a" style="left:77px;top:175px;width:274px;height:49px;line-height:49px;text-align:center;font-size:13px;color:#2b3a55;white-space:nowrap">ВРУЧЕННЯ СЕРТИФІКАТІВ</div>
  </div></div></div>
  <div class="a" style="left:635px;top:0;width:115px;height:64px;background:#fff;overflow:hidden"><div class="a" style="left:0;top:0;width:434px;height:244px;transform:scale(0.265);transform-origin:0 0"><div class="a" style="left:0;top:0;width:434px;height:244px;">
    <!-- leaves -->
    <svg class="a" style="left:0;top:0" width="434" height="244" viewBox="0 0 434 244"><g fill="#e9e0c6"><path d="M31 232 C18 226 7 212 9.5 200 C22 203 32 215 35 228 Z"/><path d="M32 229 C27 219 27 206 32.5 198.5 C38 206 39 220 36 231 Z"/><path d="M34 229 C40 219 48 212 56 210 C55 220 47 229 36 232 Z"/><path d="M29 229 C36 235 41 239 47 244 H41 C35 240 31 236 27 232 Z"/></g><path d="M382 163 C376 175 371 185 372 192 C377 199 386 202 392 200 C400 196 406 184 408 173 L387.5 186 Z" fill="#f9e8b8"/><circle cx="405" cy="217.4" r="6.3" fill="#fde28e"/></svg>
    
    
    <!-- certificate paper -->
    <div class="a" style="left:107px;top:10px;width:229px;height:166px;background:#fdfdfc;box-shadow:0 0 1px #ddd"></div>
    <div class="a" style="left:108px;top:12px;width:225px;height:154px;border:1.2px solid #3d7fc0;"></div>
    <div class="a" style="left:109.2px;top:13.2px;width:222.6px;height:151.6px;border:1.1px solid #e6da3a;"></div>
    <!-- corner laurels -->
    <svg class="a" style="left:114px;top:17px" width="23" height="24" viewBox="0 0 23 24"><g fill="#f1c63a"><path d="M4 20 C5 12 9 6 16 4" stroke="#f1c63a" stroke-width="1.1" fill="none"/><ellipse cx="18" cy="3.6" rx="3.6" ry="1.6" transform="rotate(-10 18 3.6)"/><ellipse cx="18" cy="7.4" rx="3.6" ry="1.6" transform="rotate(25 18 7.4)"/><ellipse cx="11.5" cy="5" rx="3" ry="1.5" transform="rotate(-35 11.5 5)"/><ellipse cx="5" cy="12" rx="1.5" ry="3.4" transform="rotate(15 5 12)"/><ellipse cx="3.5" cy="18" rx="1.6" ry="3.6" transform="rotate(5 3.5 18)"/><ellipse cx="7" cy="18.5" rx="1.6" ry="3.6" transform="rotate(-30 7 18.5)"/></g></svg>
    <svg class="a" style="left:306px;top:17px" width="23" height="24" viewBox="0 0 23 24"><g fill="#f1c63a" transform="translate(23 0) scale(-1 1)"><path d="M4 20 C5 12 9 6 16 4" stroke="#f1c63a" stroke-width="1.1" fill="none"/><ellipse cx="18" cy="3.6" rx="3.6" ry="1.6" transform="rotate(-10 18 3.6)"/><ellipse cx="18" cy="7.4" rx="3.6" ry="1.6" transform="rotate(25 18 7.4)"/><ellipse cx="11.5" cy="5" rx="3" ry="1.5" transform="rotate(-35 11.5 5)"/><ellipse cx="5" cy="12" rx="1.5" ry="3.4" transform="rotate(15 5 12)"/><ellipse cx="3.5" cy="18" rx="1.6" ry="3.6" transform="rotate(5 3.5 18)"/><ellipse cx="7" cy="18.5" rx="1.6" ry="3.6" transform="rotate(-30 7 18.5)"/></g></svg>
    <svg class="a" style="left:114px;top:138px" width="23" height="24" viewBox="0 0 23 24"><g fill="#f1c63a" transform="translate(0 24) scale(1 -1)"><path d="M4 20 C5 12 9 6 16 4" stroke="#f1c63a" stroke-width="1.1" fill="none"/><ellipse cx="18" cy="3.6" rx="3.6" ry="1.6" transform="rotate(-10 18 3.6)"/><ellipse cx="18" cy="7.4" rx="3.6" ry="1.6" transform="rotate(25 18 7.4)"/><ellipse cx="11.5" cy="5" rx="3" ry="1.5" transform="rotate(-35 11.5 5)"/><ellipse cx="5" cy="12" rx="1.5" ry="3.4" transform="rotate(15 5 12)"/><ellipse cx="3.5" cy="18" rx="1.6" ry="3.6" transform="rotate(5 3.5 18)"/><ellipse cx="7" cy="18.5" rx="1.6" ry="3.6" transform="rotate(-30 7 18.5)"/></g></svg>
    <svg class="a" style="left:306px;top:138px" width="23" height="24" viewBox="0 0 23 24"><g fill="#f1c63a" transform="translate(23 24) scale(-1 -1)"><path d="M4 20 C5 12 9 6 16 4" stroke="#f1c63a" stroke-width="1.1" fill="none"/><ellipse cx="18" cy="3.6" rx="3.6" ry="1.6" transform="rotate(-10 18 3.6)"/><ellipse cx="18" cy="7.4" rx="3.6" ry="1.6" transform="rotate(25 18 7.4)"/><ellipse cx="11.5" cy="5" rx="3" ry="1.5" transform="rotate(-35 11.5 5)"/><ellipse cx="5" cy="12" rx="1.5" ry="3.4" transform="rotate(15 5 12)"/><ellipse cx="3.5" cy="18" rx="1.6" ry="3.6" transform="rotate(5 3.5 18)"/><ellipse cx="7" cy="18.5" rx="1.6" ry="3.6" transform="rotate(-30 7 18.5)"/></g></svg>
    <!-- logos -->
    <svg class="a" style="left:204px;top:23px" width="14" height="20" viewBox="0 0 14 20"><rect x="2" y="0.5" width="10" height="4" fill="#ddd" stroke="#666" stroke-width="0.8"/><path d="M1 5.5 H13 V12 C13 16 10 18.8 7 19.5 C4 18.8 1 16 1 12 Z" fill="#e8e0a0" stroke="#333" stroke-width="1.4"/><path d="M4.5 8 H9 V15 M4.5 11.5 H9 M4.5 15 H9" fill="none" stroke="#333" stroke-width="1.1"/></svg>
    <div class="a" style="left:222px;top:23px;width:20px;height:20px;border-radius:50%;background:#ee7a30"></div><svg class="a" style="left:225px;top:26px" width="14" height="14" viewBox="0 0 14 14"><circle cx="7" cy="7" r="6" fill="none" stroke="#fff" stroke-width="0.7"/><path d="M7 2 V12 M4 4 C4 8 5 11 7 12 M10 4 C10 8 9 11 7 12" fill="none" stroke="#fff" stroke-width="0.8"/></svg>
    <!-- texts -->
    <div class="a" style="left:170px;top:51px;font-size:9.5px;font-weight:bold;color:#1e3a4e;white-space:nowrap">СЕРТИФІКАТ №</div>
    <div class="a" style="left:244.5px;top:53px;font-size:7.4px;font-style:italic;color:#6a70d8;white-space:nowrap;font-family:'Liberation Serif',serif;letter-spacing:0.2px">02/14.08-24</div><div class="a" style="left:244px;top:61px;width:28px;height:0.6px;background:#8a90e0"></div>
    <div class="a" style="left:160px;top:63px;font-size:9.9px;color:#1e3a4e;white-space:nowrap;-webkit-text-stroke:0.25px #1e3a4e">про проходження тренінгу</div>
    <div class="a" style="left:143px;top:75px;font-size:6px;font-weight:bold;color:#34485a;white-space:nowrap">для викладачів і співробітників «Teaching success»</div>
    <div class="a" style="left:210px;top:89px;font-size:4.5px;color:#666;white-space:nowrap">Виданий</div>
    <div class="a" style="left:128px;top:95px;font-size:11.3px;font-weight:bold;color:#1e3a4e;white-space:nowrap">Волоху Вадиму Олександровичу</div>
    <div class="a" style="left:170px;top:111px;font-size:6.8px;color:#34485a;white-space:nowrap">з 27.03.2024 р. по 05.06.2024 р.</div>
    <div class="a" style="left:171px;top:121.5px;font-size:5.2px;font-weight:bold;color:#34485a;white-space:nowrap">у кількості 150 годин (5 кредитів ЄКТС)</div>
    <div class="a" style="left:145px;top:140px;font-size:5px;color:#34485a;white-space:nowrap">Перший проректор</div>
    <div class="a" style="left:262px;top:140px;font-size:4.6px;font-weight:bold;color:#34485a;white-space:nowrap">Дмитро МАРЧЕНКО</div>
    <div class="a" style="left:209px;top:153px;font-size:5px;font-weight:bold;color:#34485a;white-space:nowrap">Київ - 2024</div>
    <!-- stamp -->
    <div class="a" style="left:173.5px;top:119.5px;width:53px;height:53px;border-radius:50%;border:2px solid rgba(60,120,230,.7);"></div><div class="a" style="left:176.5px;top:122.5px;width:47px;height:47px;border-radius:50%;border:3px dotted rgba(60,120,230,.45);"></div>
    <div class="a" style="left:182.5px;top:128.5px;width:35px;height:35px;border-radius:50%;border:1.3px solid rgba(60,120,230,.75);"></div>
    <svg class="a" style="left:193px;top:136px" width="14" height="19" viewBox="0 0 14 19"><path d="M1 1.5 V12 C1 15 3.5 17.5 7 18 C10.5 17.5 13 15 13 12 V1.5 Z" fill="none" stroke="rgba(60,120,230,.85)" stroke-width="1.1"/><path d="M7 3 V15 M3.8 4.5 V11 C3.8 13 5.2 14.2 7 14.2 C8.8 14.2 10.2 13 10.2 11 V4.5" fill="none" stroke="rgba(60,120,230,.85)" stroke-width="0.9"/></svg>
    <svg class="a" style="left:212px;top:128px" width="34" height="30" viewBox="0 0 34 30"><path d="M6 20 C12 16 20 10 26 2 M4 24 C10 18 22 16 28 18 C34 22 26 28 18 26 C12 24 8 20 10 14" fill="none" stroke="rgba(110,100,210,.65)" stroke-width="0.8"/></svg>
    <!-- banner -->
    <div class="a" style="left:77px;top:175px;width:274px;height:49px;background:#4a78cf"></div>
    <div class="a" style="left:77px;top:175px;width:274px;height:49px;line-height:49px;text-align:center;font-size:13px;color:#2b3a55;white-space:nowrap">ВРУЧЕННЯ СЕРТИФІКАТІВ</div>
  </div></div></div>
  <div class="a" style="left:766px;top:0;width:115px;height:64px;background:#fff;overflow:hidden"><div class="a" style="left:0;top:0;width:434px;height:244px;transform:scale(0.265);transform-origin:0 0"><div class="a" style="left:0;top:0;width:434px;height:244px;">
    <!-- leaves -->
    <svg class="a" style="left:0;top:0" width="434" height="244" viewBox="0 0 434 244"><g fill="#e9e0c6"><path d="M31 232 C18 226 7 212 9.5 200 C22 203 32 215 35 228 Z"/><path d="M32 229 C27 219 27 206 32.5 198.5 C38 206 39 220 36 231 Z"/><path d="M34 229 C40 219 48 212 56 210 C55 220 47 229 36 232 Z"/><path d="M29 229 C36 235 41 239 47 244 H41 C35 240 31 236 27 232 Z"/></g><path d="M382 163 C376 175 371 185 372 192 C377 199 386 202 392 200 C400 196 406 184 408 173 L387.5 186 Z" fill="#f9e8b8"/><circle cx="405" cy="217.4" r="6.3" fill="#fde28e"/></svg>
    
    
    <!-- certificate paper -->
    <div class="a" style="left:107px;top:10px;width:229px;height:166px;background:#fdfdfc;box-shadow:0 0 1px #ddd"></div>
    <div class="a" style="left:108px;top:12px;width:225px;height:154px;border:1.2px solid #3d7fc0;"></div>
    <div class="a" style="left:109.2px;top:13.2px;width:222.6px;height:151.6px;border:1.1px solid #e6da3a;"></div>
    <!-- corner laurels -->
    <svg class="a" style="left:114px;top:17px" width="23" height="24" viewBox="0 0 23 24"><g fill="#f1c63a"><path d="M4 20 C5 12 9 6 16 4" stroke="#f1c63a" stroke-width="1.1" fill="none"/><ellipse cx="18" cy="3.6" rx="3.6" ry="1.6" transform="rotate(-10 18 3.6)"/><ellipse cx="18" cy="7.4" rx="3.6" ry="1.6" transform="rotate(25 18 7.4)"/><ellipse cx="11.5" cy="5" rx="3" ry="1.5" transform="rotate(-35 11.5 5)"/><ellipse cx="5" cy="12" rx="1.5" ry="3.4" transform="rotate(15 5 12)"/><ellipse cx="3.5" cy="18" rx="1.6" ry="3.6" transform="rotate(5 3.5 18)"/><ellipse cx="7" cy="18.5" rx="1.6" ry="3.6" transform="rotate(-30 7 18.5)"/></g></svg>
    <svg class="a" style="left:306px;top:17px" width="23" height="24" viewBox="0 0 23 24"><g fill="#f1c63a" transform="translate(23 0) scale(-1 1)"><path d="M4 20 C5 12 9 6 16 4" stroke="#f1c63a" stroke-width="1.1" fill="none"/><ellipse cx="18" cy="3.6" rx="3.6" ry="1.6" transform="rotate(-10 18 3.6)"/><ellipse cx="18" cy="7.4" rx="3.6" ry="1.6" transform="rotate(25 18 7.4)"/><ellipse cx="11.5" cy="5" rx="3" ry="1.5" transform="rotate(-35 11.5 5)"/><ellipse cx="5" cy="12" rx="1.5" ry="3.4" transform="rotate(15 5 12)"/><ellipse cx="3.5" cy="18" rx="1.6" ry="3.6" transform="rotate(5 3.5 18)"/><ellipse cx="7" cy="18.5" rx="1.6" ry="3.6" transform="rotate(-30 7 18.5)"/></g></svg>
    <svg class="a" style="left:114px;top:138px" width="23" height="24" viewBox="0 0 23 24"><g fill="#f1c63a" transform="translate(0 24) scale(1 -1)"><path d="M4 20 C5 12 9 6 16 4" stroke="#f1c63a" stroke-width="1.1" fill="none"/><ellipse cx="18" cy="3.6" rx="3.6" ry="1.6" transform="rotate(-10 18 3.6)"/><ellipse cx="18" cy="7.4" rx="3.6" ry="1.6" transform="rotate(25 18 7.4)"/><ellipse cx="11.5" cy="5" rx="3" ry="1.5" transform="rotate(-35 11.5 5)"/><ellipse cx="5" cy="12" rx="1.5" ry="3.4" transform="rotate(15 5 12)"/><ellipse cx="3.5" cy="18" rx="1.6" ry="3.6" transform="rotate(5 3.5 18)"/><ellipse cx="7" cy="18.5" rx="1.6" ry="3.6" transform="rotate(-30 7 18.5)"/></g></svg>
    <svg class="a" style="left:306px;top:138px" width="23" height="24" viewBox="0 0 23 24"><g fill="#f1c63a" transform="translate(23 24) scale(-1 -1)"><path d="M4 20 C5 12 9 6 16 4" stroke="#f1c63a" stroke-width="1.1" fill="none"/><ellipse cx="18" cy="3.6" rx="3.6" ry="1.6" transform="rotate(-10 18 3.6)"/><ellipse cx="18" cy="7.4" rx="3.6" ry="1.6" transform="rotate(25 18 7.4)"/><ellipse cx="11.5" cy="5" rx="3" ry="1.5" transform="rotate(-35 11.5 5)"/><ellipse cx="5" cy="12" rx="1.5" ry="3.4" transform="rotate(15 5 12)"/><ellipse cx="3.5" cy="18" rx="1.6" ry="3.6" transform="rotate(5 3.5 18)"/><ellipse cx="7" cy="18.5" rx="1.6" ry="3.6" transform="rotate(-30 7 18.5)"/></g></svg>
    <!-- logos -->
    <svg class="a" style="left:204px;top:23px" width="14" height="20" viewBox="0 0 14 20"><rect x="2" y="0.5" width="10" height="4" fill="#ddd" stroke="#666" stroke-width="0.8"/><path d="M1 5.5 H13 V12 C13 16 10 18.8 7 19.5 C4 18.8 1 16 1 12 Z" fill="#e8e0a0" stroke="#333" stroke-width="1.4"/><path d="M4.5 8 H9 V15 M4.5 11.5 H9 M4.5 15 H9" fill="none" stroke="#333" stroke-width="1.1"/></svg>
    <div class="a" style="left:222px;top:23px;width:20px;height:20px;border-radius:50%;background:#ee7a30"></div><svg class="a" style="left:225px;top:26px" width="14" height="14" viewBox="0 0 14 14"><circle cx="7" cy="7" r="6" fill="none" stroke="#fff" stroke-width="0.7"/><path d="M7 2 V12 M4 4 C4 8 5 11 7 12 M10 4 C10 8 9 11 7 12" fill="none" stroke="#fff" stroke-width="0.8"/></svg>
    <!-- texts -->
    <div class="a" style="left:170px;top:51px;font-size:9.5px;font-weight:bold;color:#1e3a4e;white-space:nowrap">СЕРТИФІКАТ №</div>
    <div class="a" style="left:244.5px;top:53px;font-size:7.4px;font-style:italic;color:#6a70d8;white-space:nowrap;font-family:'Liberation Serif',serif;letter-spacing:0.2px">02/14.08-24</div><div class="a" style="left:244px;top:61px;width:28px;height:0.6px;background:#8a90e0"></div>
    <div class="a" style="left:160px;top:63px;font-size:9.9px;color:#1e3a4e;white-space:nowrap;-webkit-text-stroke:0.25px #1e3a4e">про проходження тренінгу</div>
    <div class="a" style="left:143px;top:75px;font-size:6px;font-weight:bold;color:#34485a;white-space:nowrap">для викладачів і співробітників «Teaching success»</div>
    <div class="a" style="left:210px;top:89px;font-size:4.5px;color:#666;white-space:nowrap">Виданий</div>
    <div class="a" style="left:128px;top:95px;font-size:11.3px;font-weight:bold;color:#1e3a4e;white-space:nowrap">Волоху Вадиму Олександровичу</div>
    <div class="a" style="left:170px;top:111px;font-size:6.8px;color:#34485a;white-space:nowrap">з 27.03.2024 р. по 05.06.2024 р.</div>
    <div class="a" style="left:171px;top:121.5px;font-size:5.2px;font-weight:bold;color:#34485a;white-space:nowrap">у кількості 150 годин (5 кредитів ЄКТС)</div>
    <div class="a" style="left:145px;top:140px;font-size:5px;color:#34485a;white-space:nowrap">Перший проректор</div>
    <div class="a" style="left:262px;top:140px;font-size:4.6px;font-weight:bold;color:#34485a;white-space:nowrap">Дмитро МАРЧЕНКО</div>
    <div class="a" style="left:209px;top:153px;font-size:5px;font-weight:bold;color:#34485a;white-space:nowrap">Київ - 2024</div>
    <!-- stamp -->
    <div class="a" style="left:173.5px;top:119.5px;width:53px;height:53px;border-radius:50%;border:2px solid rgba(60,120,230,.7);"></div><div class="a" style="left:176.5px;top:122.5px;width:47px;height:47px;border-radius:50%;border:3px dotted rgba(60,120,230,.45);"></div>
    <div class="a" style="left:182.5px;top:128.5px;width:35px;height:35px;border-radius:50%;border:1.3px solid rgba(60,120,230,.75);"></div>
    <svg class="a" style="left:193px;top:136px" width="14" height="19" viewBox="0 0 14 19"><path d="M1 1.5 V12 C1 15 3.5 17.5 7 18 C10.5 17.5 13 15 13 12 V1.5 Z" fill="none" stroke="rgba(60,120,230,.85)" stroke-width="1.1"/><path d="M7 3 V15 M3.8 4.5 V11 C3.8 13 5.2 14.2 7 14.2 C8.8 14.2 10.2 13 10.2 11 V4.5" fill="none" stroke="rgba(60,120,230,.85)" stroke-width="0.9"/></svg>
    <svg class="a" style="left:212px;top:128px" width="34" height="30" viewBox="0 0 34 30"><path d="M6 20 C12 16 20 10 26 2 M4 24 C10 18 22 16 28 18 C34 22 26 28 18 26 C12 24 8 20 10 14" fill="none" stroke="rgba(110,100,210,.65)" stroke-width="0.8"/></svg>
    <!-- banner -->
    <div class="a" style="left:77px;top:175px;width:274px;height:49px;background:#4a78cf"></div>
    <div class="a" style="left:77px;top:175px;width:274px;height:49px;line-height:49px;text-align:center;font-size:13px;color:#2b3a55;white-space:nowrap">ВРУЧЕННЯ СЕРТИФІКАТІВ</div>
  </div></div></div>
  <div class="a" style="left:0.5px;top:64.9px;width:801px;height:16px;font-size:10.4px;color:#c4c4c4;letter-spacing:-0.7px">
    <div class="a" style="left:114px;top:2px">19</div>
    <div class="a" style="left:245px;top:2px">20</div>
    <div class="a" style="left:376px;top:2px">21</div>
    <div class="a" style="left:506px;top:2px;color:#d8682e;font-size:10px">22</div>
    <div class="a" style="left:638px;top:2px">23</div>
    <div class="a" style="left:769px;top:2px">24</div>
  </div>
</div>
<div class="a" style="left:504.8px;top:452px;width:123px;height:72px;border:3px solid #d4642a;"></div>
<div class="a" style="left:507.8px;top:455px;width:117px;height:66px;border:1px solid #1f1f1f;"></div>
<svg class="a" style="left:510px;top:461px" width="20" height="21" viewBox="0 0 20 21"><path d="M4 18 C1 15 1 10 4 6 L8 2 C9 1 10.5 2 10 3.5 L11 2.5 C12 1.5 13.5 2.5 13 4 L14 3.5 C15 3 16 4 15.5 5 L16.5 5 C17.5 5 18 6 17.5 7 L15 13 C13 18 8 21 4 18 Z" fill="#f08a24"/><path d="M6 18 C3 15 3 11 6 8 L10 4 C11 3 12.5 4 12 5.5 L13 5 C14 4.5 15 5.5 14.5 6.5 L15.5 6.5 C16.5 6.5 17 7.5 16.5 8.5 L15 13 C13 17.5 9 20 6 18 Z" fill="#ffc43a"/><path d="M2 4 L3.5 5 M4.5 1 L5.3 3 M1 7 L2.8 7.4" stroke="#5ab0f0" stroke-width="0.9"/></svg>
<!-- scrollbar -->
<div class="a" style="left:397px;top:541px;width:141px;height:3px;border-radius:2px;background:#5a5a5a"></div>
<div id="panel" class="a">
  <div class="a" style="left:13.5px;top:15.5px;font-size:10.5px;font-weight:bold;color:#fff;white-space:nowrap;letter-spacing:-0.05px">Участники</div>
  <svg class="a" style="left:163px;top:20px" width="10" height="3" viewBox="0 0 10 3"><circle cx="1.3" cy="1.5" r="1" fill="#d0d0d0"/><circle cx="5" cy="1.5" r="1" fill="#d0d0d0"/><circle cx="8.7" cy="1.5" r="1" fill="#d0d0d0"/></svg>
  <svg class="a" style="left:185px;top:17px" width="9" height="9" viewBox="0 0 9 9"><path d="M0.6 0.6 L8.4 8.4 M8.4 0.6 L0.6 8.4" stroke="#d8d8d8" stroke-width="1.1"/></svg>
  <div class="a" style="left:0;top:40px;width:213px;height:1px;background:#333"></div>
  <div class="a" style="left:13.5px;top:51.5px;width:187px;height:21.5px;background:#2d2d2d;border-radius:3px">
    <div class="a" style="left:9px;top:5.5px;font-size:9px;color:#8e8e8e;white-space:nowrap">Введите имя</div>
    <svg class="a" style="left:167px;top:5px" width="11" height="11" viewBox="0 0 11 11"><circle cx="4.5" cy="4.5" r="3.6" fill="none" stroke="#cfcfcf" stroke-width="1.1"/><path d="M7.2 7.2 L10.3 10.3" stroke="#cfcfcf" stroke-width="1.2"/></svg>
  </div>
  <div class="a" style="left:13.5px;top:79.5px;width:187px;height:21.5px;background:#262626;border:1px solid #444;border-radius:3px">
    <svg class="a" style="left:34px;top:4px" width="11" height="11" viewBox="0 0 11 11"><path d="M4 1.5 H2.5 C1.6 1.5 1 2.1 1 3 V8.5 C1 9.4 1.6 10 2.5 10 H8 C8.9 10 9.5 9.4 9.5 8.5 V7" fill="none" stroke="#e0e0e0" stroke-width="1"/><path d="M6.8 0.8 L10.2 3.6 L6.8 6.4 V5 C5 5 3.8 5.6 3 7.2 C3 4.6 4.6 2.6 6.8 2.3 Z" fill="none" stroke="#e0e0e0" stroke-width="0.95" stroke-linejoin="round"/></svg>
    <div class="a" style="left:49px;top:4.5px;font-size:9.6px;color:#f0f0f0;white-space:nowrap;letter-spacing:-0.05px">Отправка приглашения</div>
  </div>
  <svg class="a" style="left:3.5px;top:115px" width="7" height="5" viewBox="0 0 7 5"><path d="M0.5 0.5 H6.5 L3.5 4.5 Z" fill="#cfcfcf"/></svg>
  <div class="a" style="left:13.5px;top:113px;font-size:7.8px;color:#e0e0e0;white-space:nowrap">В этом собрании (10)</div>
<div class="a" style="left:0;top:147px;width:213px;height:0"><div class="a" style="left:13.8px;top:-10.5px;width:21px;height:21px;border-radius:50%;overflow:hidden;background:#fff;"><div class="a" style="left:4px;top:1px;width:13px;height:13px;border-radius:45%;background:#8a3830"></div><div class="a" style="left:6px;top:4px;width:9px;height:10px;border-radius:45%;background:#e0b8a8"></div><div class="a" style="left:2px;top:14px;width:17px;height:10px;border-radius:40% 40% 0 0;background:#2a2a3a"></div><div class="a" style="left:7px;top:14px;width:6px;height:5px;border-radius:40%;background:#e8c8b8"></div></div><div class="a" style="left:40.8px;top:-10.2px;font-size:9.35px;color:#ececec;white-space:nowrap">Мартинець Лілія Асхатівна</div><div class="a" style="left:40.8px;top:2px;font-size:7.7px;color:#9a9a9a;white-space:nowrap">Инициатор</div><svg class="a" style="left:190px;top:-7px" width="7" height="12" viewBox="0 0 7 12"><rect x="1.7" y="0.5" width="3.6" height="6.6" rx="1.8" fill="#e0e0e0"/><path d="M0.6 5.4 C0.6 7.6 1.8 8.8 3.5 8.8 C5.2 8.8 6.4 7.6 6.4 5.4 M3.5 8.8 V11.4" fill="none" stroke="#e0e0e0" stroke-width="0.95"/></svg></div>
<div class="a" style="left:0;top:179px;width:213px;height:0"><div class="a" style="left:13.8px;top:-10.5px;width:21px;height:21px;border-radius:50%;overflow:hidden;background:#f2d7d9;"><div style="width:21px;height:21px;line-height:21px;text-align:center;font-size:8px;-webkit-text-stroke:0.1px currentColor;color:#9a4450;letter-spacing:-0.2px">ВО</div></div><div class="a" style="left:40.8px;top:-4.8px;font-size:9.35px;color:#ececec;white-space:nowrap;letter-spacing:-0.05px">Волох Вадим Олександрович</div><svg class="a" style="left:188px;top:-6px" width="11" height="12" viewBox="0 0 11 12"><path d="M4 2.4 C4 1.4 4.7 0.7 5.5 0.7 C6.3 0.7 7 1.4 7 2.4 V5.5 M7 7.2 C6.7 7.6 6.1 7.9 5.5 7.9 C4.7 7.9 4 7.2 4 6.4 V4" fill="none" stroke="#bdbdbd" stroke-width="0.95"/><path d="M2.2 5.6 C2.2 7.8 3.6 9.2 5.5 9.2 C6.3 9.2 7 8.9 7.6 8.4 M8.8 6.6 C8.8 6.3 8.8 6 8.8 5.6 M5.5 9.2 V11.2" fill="none" stroke="#bdbdbd" stroke-width="0.95"/><path d="M1.5 0.9 L9.5 11" stroke="#bdbdbd" stroke-width="0.95"/></svg></div>
<div class="a" style="left:0;top:211px;width:213px;height:0"><div class="a" style="left:13.8px;top:-10.5px;width:21px;height:21px;border-radius:50%;overflow:hidden;background:#222;border:1.5px solid #e8e8e8;"><div class="a" style="left:0;top:0;width:18px;height:18px;border-radius:50%;background:radial-gradient(circle,#555 0,#222 70%)"></div><div class="a" style="left:5.5px;top:2px;width:8px;height:9px;border-radius:45%;background:#d86a3a"></div><div class="a" style="left:7px;top:4px;width:5px;height:6px;border-radius:45%;background:#f0d0c0"></div><div class="a" style="left:3px;top:10px;width:12px;height:9px;border-radius:40% 40% 0 0;background:#f0f0f0"></div></div><div class="a" style="left:40.8px;top:-4.8px;font-size:9.35px;color:#ececec;white-space:nowrap;letter-spacing:-0.05px">Гробовод Вікторія Олександрів...</div><svg class="a" style="left:188px;top:-6px" width="11" height="12" viewBox="0 0 11 12"><path d="M4 2.4 C4 1.4 4.7 0.7 5.5 0.7 C6.3 0.7 7 1.4 7 2.4 V5.5 M7 7.2 C6.7 7.6 6.1 7.9 5.5 7.9 C4.7 7.9 4 7.2 4 6.4 V4" fill="none" stroke="#bdbdbd" stroke-width="0.95"/><path d="M2.2 5.6 C2.2 7.8 3.6 9.2 5.5 9.2 C6.3 9.2 7 8.9 7.6 8.4 M8.8 6.6 C8.8 6.3 8.8 6 8.8 5.6 M5.5 9.2 V11.2" fill="none" stroke="#bdbdbd" stroke-width="0.95"/><path d="M1.5 0.9 L9.5 11" stroke="#bdbdbd" stroke-width="0.95"/></svg></div>
<div class="a" style="left:0;top:243px;width:213px;height:0"><div class="a" style="left:13.8px;top:-10.5px;width:21px;height:21px;border-radius:50%;overflow:hidden;background:#a8ac98;"><div class="a" style="left:4px;top:2px;width:13px;height:9px;border-radius:50% 50% 20% 20%;background:#1a1a18"></div><div class="a" style="left:5px;top:5px;width:11px;height:11px;border-radius:45%;background:#b08878"></div><div class="a" style="left:0;top:14px;width:21px;height:8px;background:#333"></div><div class="a" style="left:8px;top:15px;width:5px;height:6px;background:#ddd"></div></div><div class="a" style="left:40.8px;top:-4.8px;font-size:9.35px;color:#ececec;white-space:nowrap;letter-spacing:-0.05px">Карпіцький Миколай Миколай...</div><svg class="a" style="left:188px;top:-6px" width="11" height="12" viewBox="0 0 11 12"><path d="M4 2.4 C4 1.4 4.7 0.7 5.5 0.7 C6.3 0.7 7 1.4 7 2.4 V5.5 M7 7.2 C6.7 7.6 6.1 7.9 5.5 7.9 C4.7 7.9 4 7.2 4 6.4 V4" fill="none" stroke="#bdbdbd" stroke-width="0.95"/><path d="M2.2 5.6 C2.2 7.8 3.6 9.2 5.5 9.2 C6.3 9.2 7 8.9 7.6 8.4 M8.8 6.6 C8.8 6.3 8.8 6 8.8 5.6 M5.5 9.2 V11.2" fill="none" stroke="#bdbdbd" stroke-width="0.95"/><path d="M1.5 0.9 L9.5 11" stroke="#bdbdbd" stroke-width="0.95"/></svg></div>
<div class="a" style="left:0;top:275px;width:213px;height:0"><div class="a" style="left:13.8px;top:-10.5px;width:21px;height:21px;border-radius:50%;overflow:hidden;background:#fbe4cc;"><div style="width:21px;height:21px;line-height:21px;text-align:center;font-size:8px;-webkit-text-stroke:0.1px currentColor;color:#8a5a2e;letter-spacing:-0.2px">МФ</div></div><div class="a" style="left:40.8px;top:-4.8px;font-size:9.35px;color:#ececec;white-space:nowrap;letter-spacing:-0.05px">Могутова Валентина Федорівна</div><svg class="a" style="left:188px;top:-6px" width="11" height="12" viewBox="0 0 11 12"><path d="M4 2.4 C4 1.4 4.7 0.7 5.5 0.7 C6.3 0.7 7 1.4 7 2.4 V5.5 M7 7.2 C6.7 7.6 6.1 7.9 5.5 7.9 C4.7 7.9 4 7.2 4 6.4 V4" fill="none" stroke="#bdbdbd" stroke-width="0.95"/><path d="M2.2 5.6 C2.2 7.8 3.6 9.2 5.5 9.2 C6.3 9.2 7 8.9 7.6 8.4 M8.8 6.6 C8.8 6.3 8.8 6 8.8 5.6 M5.5 9.2 V11.2" fill="none" stroke="#bdbdbd" stroke-width="0.95"/><path d="M1.5 0.9 L9.5 11" stroke="#bdbdbd" stroke-width="0.95"/></svg></div>
<div class="a" style="left:0;top:307px;width:213px;height:0"><div class="a" style="left:13.8px;top:-10.5px;width:21px;height:21px;border-radius:50%;overflow:hidden;background:#f6d4cc;"><div style="width:21px;height:21px;line-height:21px;text-align:center;font-size:8px;-webkit-text-stroke:0.1px currentColor;color:#a24a3e;letter-spacing:-0.2px">НВ</div></div><div class="a" style="left:40.8px;top:-4.8px;font-size:9.35px;color:#ececec;white-space:nowrap;letter-spacing:-0.05px">Нікітіна Віра Вікторівна</div><svg class="a" style="left:188px;top:-6px" width="11" height="12" viewBox="0 0 11 12"><path d="M4 2.4 C4 1.4 4.7 0.7 5.5 0.7 C6.3 0.7 7 1.4 7 2.4 V5.5 M7 7.2 C6.7 7.6 6.1 7.9 5.5 7.9 C4.7 7.9 4 7.2 4 6.4 V4" fill="none" stroke="#bdbdbd" stroke-width="0.95"/><path d="M2.2 5.6 C2.2 7.8 3.6 9.2 5.5 9.2 C6.3 9.2 7 8.9 7.6 8.4 M8.8 6.6 C8.8 6.3 8.8 6 8.8 5.6 M5.5 9.2 V11.2" fill="none" stroke="#bdbdbd" stroke-width="0.95"/><path d="M1.5 0.9 L9.5 11" stroke="#bdbdbd" stroke-width="0.95"/></svg></div>
<div class="a" style="left:0;top:339px;width:213px;height:0"><div class="a" style="left:13.8px;top:-10.5px;width:21px;height:21px;border-radius:50%;overflow:hidden;background:radial-gradient(circle at 50% 45%,#c0b8a8 0,#8a7a60 50%,#5a4a30 100%);"><div class="a" style="left:5px;top:3px;width:11px;height:12px;border-radius:45%;background:#a09480"></div><div class="a" style="left:3px;top:13px;width:15px;height:9px;border-radius:40% 40% 0 0;background:#4a5a6a"></div></div><div class="a" style="left:40.8px;top:-4.8px;font-size:9.35px;color:#ececec;white-space:nowrap;letter-spacing:-0.05px">Стрижак Тетяна Анатоліївна</div><svg class="a" style="left:188px;top:-6px" width="11" height="12" viewBox="0 0 11 12"><path d="M4 2.4 C4 1.4 4.7 0.7 5.5 0.7 C6.3 0.7 7 1.4 7 2.4 V5.5 M7 7.2 C6.7 7.6 6.1 7.9 5.5 7.9 C4.7 7.9 4 7.2 4 6.4 V4" fill="none" stroke="#bdbdbd" stroke-width="0.95"/><path d="M2.2 5.6 C2.2 7.8 3.6 9.2 5.5 9.2 C6.3 9.2 7 8.9 7.6 8.4 M8.8 6.6 C8.8 6.3 8.8 6 8.8 5.6 M5.5 9.2 V11.2" fill="none" stroke="#bdbdbd" stroke-width="0.95"/><path d="M1.5 0.9 L9.5 11" stroke="#bdbdbd" stroke-width="0.95"/></svg></div>
<div class="a" style="left:0;top:371px;width:213px;height:0"><div class="a" style="left:13.8px;top:-10.5px;width:21px;height:21px;border-radius:50%;overflow:hidden;background:#f0dcd6;"><div style="width:21px;height:21px;line-height:21px;text-align:center;font-size:8px;-webkit-text-stroke:0.1px currentColor;color:#7a5048;letter-spacing:-0.2px">ЧМ</div></div><div class="a" style="left:40.8px;top:-4.8px;font-size:9.35px;color:#ececec;white-space:nowrap;letter-spacing:-0.05px">Чаплигін Євген Миколайович</div><svg class="a" style="left:188px;top:-6px" width="11" height="12" viewBox="0 0 11 12"><path d="M4 2.4 C4 1.4 4.7 0.7 5.5 0.7 C6.3 0.7 7 1.4 7 2.4 V5.5 M7 7.2 C6.7 7.6 6.1 7.9 5.5 7.9 C4.7 7.9 4 7.2 4 6.4 V4" fill="none" stroke="#bdbdbd" stroke-width="0.95"/><path d="M2.2 5.6 C2.2 7.8 3.6 9.2 5.5 9.2 C6.3 9.2 7 8.9 7.6 8.4 M8.8 6.6 C8.8 6.3 8.8 6 8.8 5.6 M5.5 9.2 V11.2" fill="none" stroke="#bdbdbd" stroke-width="0.95"/><path d="M1.5 0.9 L9.5 11" stroke="#bdbdbd" stroke-width="0.95"/></svg></div>
<div class="a" style="left:0;top:403px;width:213px;height:0"><div class="a" style="left:13.8px;top:-10.5px;width:21px;height:21px;border-radius:50%;overflow:hidden;background:#d4dcf2;"><div style="width:21px;height:21px;line-height:21px;text-align:center;font-size:8px;-webkit-text-stroke:0.1px currentColor;color:#3a4a8a;letter-spacing:-0.2px">ЧО</div></div><div class="a" style="left:40.8px;top:-4.8px;font-size:9.35px;color:#ececec;white-space:nowrap;letter-spacing:-0.05px">Чернишенко Ганна Олександрі...</div><svg class="a" style="left:188px;top:-6px" width="11" height="12" viewBox="0 0 11 12"><path d="M4 2.4 C4 1.4 4.7 0.7 5.5 0.7 C6.3 0.7 7 1.4 7 2.4 V5.5 M7 7.2 C6.7 7.6 6.1 7.9 5.5 7.9 C4.7 7.9 4 7.2 4 6.4 V4" fill="none" stroke="#bdbdbd" stroke-width="0.95"/><path d="M2.2 5.6 C2.2 7.8 3.6 9.2 5.5 9.2 C6.3 9.2 7 8.9 7.6 8.4 M8.8 6.6 C8.8 6.3 8.8 6 8.8 5.6 M5.5 9.2 V11.2" fill="none" stroke="#bdbdbd" stroke-width="0.95"/><path d="M1.5 0.9 L9.5 11" stroke="#bdbdbd" stroke-width="0.95"/></svg></div>
<div class="a" style="left:0;top:435px;width:213px;height:0"><div class="a" style="left:13.8px;top:-10.5px;width:21px;height:21px;border-radius:50%;overflow:hidden;background:#d7efd9;"><div style="width:21px;height:21px;line-height:21px;text-align:center;font-size:8px;-webkit-text-stroke:0.1px currentColor;color:#3a7a46;letter-spacing:-0.2px">ЮВ</div></div><div class="a" style="left:40.8px;top:-4.8px;font-size:9.35px;color:#ececec;white-space:nowrap;letter-spacing:-0.05px">Юркевич Юрій Вадимович</div><svg class="a" style="left:188px;top:-6px" width="11" height="12" viewBox="0 0 11 12"><path d="M4 2.4 C4 1.4 4.7 0.7 5.5 0.7 C6.3 0.7 7 1.4 7 2.4 V5.5 M7 7.2 C6.7 7.6 6.1 7.9 5.5 7.9 C4.7 7.9 4 7.2 4 6.4 V4" fill="none" stroke="#bdbdbd" stroke-width="0.95"/><path d="M2.2 5.6 C2.2 7.8 3.6 9.2 5.5 9.2 C6.3 9.2 7 8.9 7.6 8.4 M8.8 6.6 C8.8 6.3 8.8 6 8.8 5.6 M5.5 9.2 V11.2" fill="none" stroke="#bdbdbd" stroke-width="0.95"/><path d="M1.5 0.9 L9.5 11" stroke="#bdbdbd" stroke-width="0.95"/></svg></div>

  <svg class="a" style="left:3.5px;top:461px" width="7" height="5" viewBox="0 0 7 5"><path d="M0.5 0.5 H6.5 L3.5 4.5 Z" fill="#cfcfcf"/></svg>
  <div class="a" style="left:13.5px;top:457.6px;font-size:8px;color:#e0e0e0;white-space:nowrap">Другие приглашенные (4)</div>
  <div class="a" style="left:19px;top:481px;width:12px;height:12px;border-radius:50%;background:#d8c89a"></div>
</div>
<div id="taskbar" class="a">
  <svg class="a" style="left:10.5px;top:8.5px" width="11" height="11" viewBox="0 0 11 11"><path d="M0 1.6 L4.6 1 V5.2 H0 Z M5.4 0.9 L11 0.1 V5.2 H5.4 Z M0 5.9 H4.6 V10.1 L0 9.5 Z M5.4 5.9 H11 V10.9 L5.4 10.2 Z" fill="#fff"/></svg>
  <div class="a" style="left:32px;top:0;width:192px;height:28px;background:#f0f0f0">
    <svg class="a" style="left:7.5px;top:8px" width="12" height="12" viewBox="0 0 12 12"><circle cx="7.2" cy="4.6" r="3.6" fill="none" stroke="#333" stroke-width="1.1"/><path d="M4.6 7.2 L0.8 11" stroke="#333" stroke-width="1.2"/></svg>
    <div class="a" style="left:26.5px;top:8px;font-size:10.2px;color:#3a3a3a;white-space:nowrap">Поиск</div>
    <div class="a" style="left:140px;top:17px;width:52px;height:11px;background:#e8c89a;clip-path:polygon(12% 0,100% 0,100% 100%,0 100%)"></div>
    <svg class="a" style="left:145px;top:6px" width="20" height="18" viewBox="0 0 20 18"><path d="M1 8 L12 4 L17 12 L6 16 Z" fill="#f4f4ee" stroke="#3a9a5a" stroke-width="1.2"/><path d="M4 10 L11 7.5 M5 12 L12 9.5" stroke="#aaa" stroke-width="0.6"/><path d="M12 9 L18 1.5" stroke="#e8703a" stroke-width="2"/></svg>
    <div class="a" style="left:170px;top:5px;width:13px;height:21px;border-radius:6px 6px 3px 3px;background:linear-gradient(180deg,#3a90f0,#1a60d0)"></div>
    <div class="a" style="left:173px;top:2px;width:7px;height:5px;border:1.5px solid #2a70e0;border-radius:3px 3px 0 0;border-bottom:none"></div>
  </div>
  <svg class="a" style="left:233px;top:8px" width="14" height="12" viewBox="0 0 14 12"><rect x="3.2" y="2.2" width="6.6" height="7.6" fill="none" stroke="#cfd6da" stroke-width="1.1"/><path d="M0.8 1 H12 M0.8 11 H12 M12.6 2 V4 M12.6 5.5 V6.5 M12.6 8 V10" stroke="#cfd6da" stroke-width="1.1"/></svg>
  <!-- edge -->
  <div class="a" style="left:266px;top:6px;width:16px;height:16px;border-radius:50%;background:conic-gradient(from 200deg,#1a7ad0,#30c0a0,#60d060,#1a8ad8,#1a60b0)"></div>
  <div class="a" style="left:271px;top:11px;width:7px;height:7px;border-radius:50%;background:#1f3845"></div>
  <div class="a" style="left:265px;top:15px;width:9px;height:6px;background:#d08030"></div>
  <!-- skype -->
  <div class="a" style="left:300px;top:6px;width:16px;height:16px;border-radius:50%;background:#1aa0e8;color:#fff;font-size:11px;font-weight:bold;text-align:center;line-height:16px">S</div>
  <!-- store -->
  <div class="a" style="left:332px;top:6px;width:16px;height:16px;border-radius:2px;background:#f4f4f4"></div>
  <div class="a" style="left:336px;top:3px;width:8px;height:5px;border:1.5px solid #2a90d8;border-bottom:none;border-radius:4px 4px 0 0"></div>
  <div class="a" style="left:337px;top:11px;width:3px;height:3px;background:#f25022"></div><div class="a" style="left:340.5px;top:11px;width:3px;height:3px;background:#7fba00"></div><div class="a" style="left:337px;top:14.5px;width:3px;height:3px;background:#00a4ef"></div><div class="a" style="left:340.5px;top:14.5px;width:3px;height:3px;background:#ffb900"></div>
  <!-- mail -->
  <svg class="a" style="left:364px;top:7px" width="18" height="14" viewBox="0 0 18 14"><path d="M0 4 L9 0 L18 4 V14 H0 Z" fill="#1a7ad8"/><path d="M0 4 L9 9 L18 4 V14 H0 Z" fill="#3aa0f0"/><path d="M0 14 L9 8 L18 14 Z" fill="#60b8f8"/></svg>
  <!-- explorer -->
  <svg class="a" style="left:397px;top:7px" width="18" height="15" viewBox="0 0 18 15"><path d="M0 1 H7 L9 3 H18 V15 H0 Z" fill="#e8a820"/><rect x="0" y="5" width="18" height="10" fill="#f8d050"/><rect x="5" y="9" width="8" height="4" fill="#3a8ad8"/></svg>
  <!-- chrome -->
  <div class="a" style="left:431px;top:6px;width:16px;height:16px;border-radius:50%;background:conic-gradient(from -30deg,#e04030 0 120deg,#f8c020 120deg 240deg,#30a050 240deg 360deg)"></div>
  <div class="a" style="left:435px;top:10px;width:8px;height:8px;border-radius:50%;background:#2a7ae0;border:1.5px solid #fff"></div>
  <!-- teams active -->
  <div class="a" style="left:457px;top:0;width:30px;height:28px;background:#3c5260"></div>
  <div class="a" style="left:464px;top:8px;width:13px;height:12px;border-radius:2px;background:#5b5fc7;color:#fff;font-size:7px;font-weight:bold;text-align:center;line-height:12px">T</div>
  <div class="a" style="left:473px;top:4px;width:6px;height:6px;border-radius:50%;background:#7b83eb"></div>
  <div class="a" style="left:474px;top:14px;width:9px;height:9px;border-radius:50%;background:#d42030;color:#fff;font-size:6.5px;text-align:center;line-height:9px">1</div>
  <!-- word -->
  <div class="a" style="left:499px;top:6px;width:16px;height:15px;border-radius:2px;background:linear-gradient(180deg,#41a5ee,#2b7cd3 40%,#185abd 70%,#103f91)"></div>
  <div class="a" style="left:496px;top:10px;width:9px;height:9px;border-radius:1px;background:#185abd;color:#fff;font-size:6.5px;font-weight:bold;text-align:center;line-height:9px">W</div>
  <!-- excel -->
  <div class="a" style="left:532px;top:6px;width:16px;height:15px;border-radius:2px;background:linear-gradient(180deg,#33c481,#21a366 40%,#107c41 70%,#185c37)"></div>
  <div class="a" style="left:529px;top:10px;width:9px;height:9px;border-radius:1px;background:#107c41;color:#fff;font-size:6.5px;font-weight:bold;text-align:center;line-height:9px">X</div>
  <!-- ppt -->
  <div class="a" style="left:565px;top:6px;width:16px;height:16px;border-radius:50%;background:conic-gradient(#ff8f6b 0 90deg,#ed6c47 90deg 180deg,#c43e1c 180deg 360deg)"></div>
  <div class="a" style="left:562px;top:10px;width:9px;height:9px;border-radius:1px;background:#c43e1c;color:#fff;font-size:6.5px;font-weight:bold;text-align:center;line-height:9px">P</div>
  <!-- viber -->
  <div class="a" style="left:597px;top:6px;width:15px;height:15px;border-radius:50% 50% 50% 10%;background:#7360f2"></div>
  <div class="a" style="left:600px;top:9px;width:9px;height:9px;border-radius:50%;background:#fff"></div>
  <div class="a" style="left:603px;top:12px;width:4px;height:4px;border-radius:50%;background:#7360f2"></div>
  <div class="a" style="left:603px;top:13px;width:11px;height:9px;border-radius:4px;background:#e02838;color:#fff;font-size:6.5px;text-align:center;line-height:9px">56</div>
  <!-- acrobat -->
  <div class="a" style="left:628px;top:6px;width:16px;height:16px;border-radius:2px;background:#c8102e"></div>
  <svg class="a" style="left:630px;top:8px" width="12" height="12" viewBox="0 0 12 12"><path d="M6 1.5 C7 1.5 6.5 4 5 7 C4 9 2 10.5 1.6 9.8 C1.2 9 4 7.6 7 7.2 C9.5 6.9 11 7.6 10.4 8.2 C9.8 8.8 7.8 7.4 6.2 5 C5.2 3.4 5.2 1.5 6 1.5 Z" fill="none" stroke="#fff" stroke-width="1"/></svg>
  <!-- underline indicators -->
  <div class="a" style="left:393.5px;top:25.25px;width:26px;height:2px;background:#98c0dc"></div>
  <div class="a" style="left:426px;top:25.25px;width:26.5px;height:2px;background:#98c0dc"></div>
  <div class="a" style="left:459px;top:25.25px;width:27px;height:2px;background:#98c0dc"></div>
  <div class="a" style="left:492px;top:25.25px;width:27px;height:2px;background:#98c0dc"></div>
  <div class="a" style="left:525.5px;top:25.25px;width:27px;height:2px;background:#98c0dc"></div>
  <div class="a" style="left:558.5px;top:25.25px;width:27px;height:2px;background:#98c0dc"></div>
  <div class="a" style="left:591.5px;top:25.25px;width:27px;height:2px;background:#98c0dc"></div>
  <div class="a" style="left:625px;top:25.25px;width:27px;height:2px;background:#98c0dc"></div>
  <!-- tray -->
  <div class="a" style="left:795px;top:5px;width:17px;height:17px;border-radius:50%;background:repeating-linear-gradient(110deg,#1a90c8 0 2px,#1f3845 2px 3px)"></div>
  <div class="a" style="left:816px;top:8.5px;font-size:9.6px;color:#fff;white-space:nowrap">Match</div>
  <svg class="a" style="left:858px;top:11px" width="9" height="6" viewBox="0 0 9 6"><path d="M0.8 5.2 L4.5 1.2 L8.2 5.2" fill="none" stroke="#fff" stroke-width="1"/></svg>
  <svg class="a" style="left:876px;top:7px" width="7" height="14" viewBox="0 0 7 14"><rect x="1" y="0.5" width="5" height="9" rx="2.5" fill="#fff"/><path d="M0.5 11 H6.5 M3.5 9 V12" stroke="#fff" stroke-width="1.2"/></svg>
  <svg class="a" style="left:889px;top:9px" width="14" height="10" viewBox="0 0 14 10"><rect x="1" y="2" width="11" height="7" fill="none" stroke="#fff" stroke-width="0.9"/><rect x="2" y="3" width="9" height="5" fill="#fff"/><path d="M0 3 L2 1 M0 1 L2 3" stroke="#fff" stroke-width="0.6"/></svg>
  <svg class="a" style="left:906px;top:8px" width="13" height="12" viewBox="0 0 13 12"><path d="M1 4 H3 L6 1.5 V10.5 L3 8 H1 Z" fill="none" stroke="#fff" stroke-width="0.9"/><path d="M8 4 C8.8 5 8.8 7 8 8 M10 2.5 C11.6 4.5 11.6 7.5 10 9.5" fill="none" stroke="#fff" stroke-width="0.9"/></svg>
  <div class="a" style="left:923.5px;top:9.5px;font-size:7.8px;color:#fff;white-space:nowrap">УКР</div>
  <div class="a" style="left:945px;top:1.5px;width:42px;text-align:center;font-size:7.6px;color:#fff;line-height:12.5px;white-space:nowrap">17:17<br>05.06.2024</div>
  <svg class="a" style="left:996px;top:7px" width="14" height="16" viewBox="0 0 14 16"><path d="M1 1 H12 V10 H6 L3 13 V10 H1 Z" fill="#fff"/><path d="M3 3.5 H10 M3 5.5 H10 M3 7.5 H8" stroke="#1f3845" stroke-width="0.8"/></svg>
  <div class="a" style="left:1003px;top:13px;width:11px;height:11px;border-radius:50%;background:#333;border:1px solid #888;color:#fff;font-size:7px;text-align:center;line-height:9px">2</div>
</div>
</body></html>
